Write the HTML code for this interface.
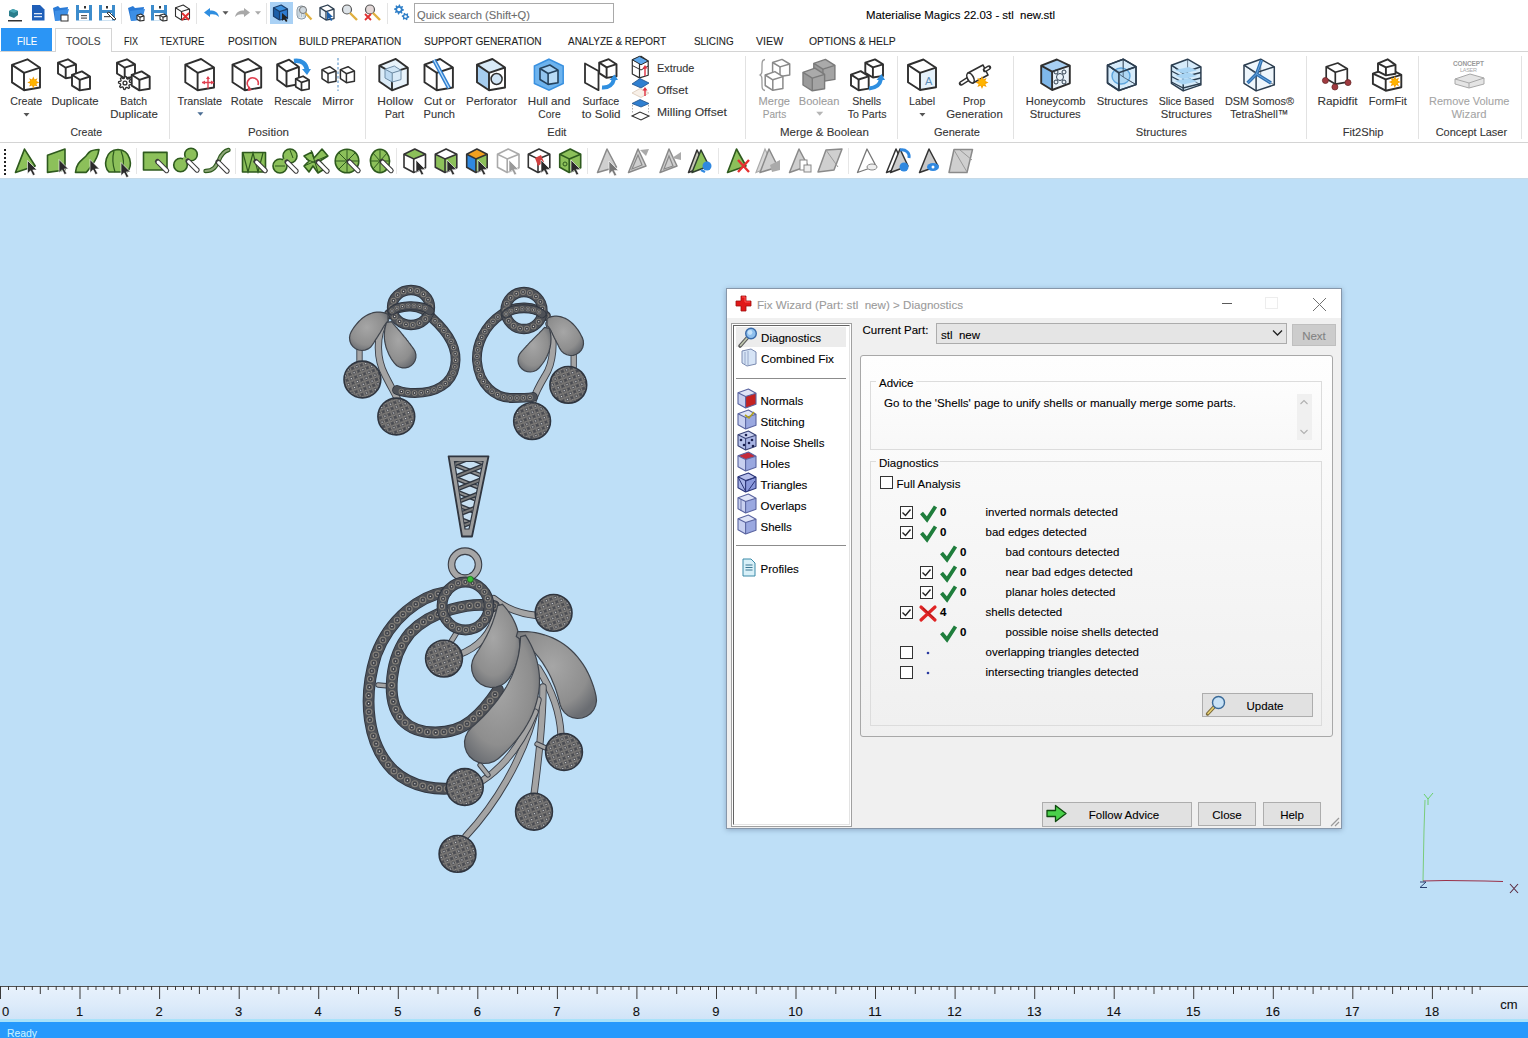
<!DOCTYPE html>
<html><head><meta charset="utf-8"><title>Materialise Magics</title><style>*{margin:0;padding:0;box-sizing:border-box}
html,body{width:1528px;height:1038px;overflow:hidden}
body{position:relative;font-family:"Liberation Sans",sans-serif;font-size:12px;color:#000;background:#fff}
.a{position:absolute}
.t{position:absolute;white-space:pre}
svg{overflow:visible}
.t{-webkit-text-stroke:0.1px currentColor}
</style></head><body>
<div class="a" style="left:0px;top:0px;width:1528px;height:28px;background:#fff"></div>
<div class="t" style="top:9.62px;font-size:11.5px;line-height:11.5px;color:#000;left:865.5px;transform:scaleX(0.9923);transform-origin:0 0;">Materialise Magics 22.03 - stl&nbsp; new.stl</div>
<div class="a" style="left:414px;top:3px;width:200px;height:20px;border:1px solid #a9a9a9;background:#fff"></div>
<div class="t" style="top:9.62px;font-size:11.5px;line-height:11.5px;color:#6d6d6d;left:417px;transform:scaleX(0.9688);transform-origin:0 0;">Quick search (Shift+Q)</div>
<svg class="a" style="left:0px;top:0px;" width="1528" height="28" viewBox="0 0 1528 28"><polygon points="9,11 13,9 18,11 18,15 14,18 9,16" fill="#2b7e8c"/><polygon points="13,9 18,11 14,13 9,11" fill="#4aa7b5"/><rect x="8" y="20" width="14" height="1.5" fill="#333"/><path d="M32,5 L40,5 L44.5,9.5 L44.5,20.5 L32,20.5 Z" fill="#1f5fb8"/><rect x="34" y="13" width="8" height="1.3" fill="#dfe9f7"/><rect x="34" y="16" width="8" height="1.3" fill="#dfe9f7"/><path d="M53,8 L58,6 L60,8 L68,7 L66,19 L55,21 Z" fill="#2a7ad6"/><path d="M55,11 L69,9 L66,20 L55,21 Z" fill="#3d8fe6"/><rect x="61" y="15" width="7" height="6" fill="#fff" stroke="#333" stroke-width="1"/><path d="M76,5 L92,5 L92,20.5 L76,20.5 Z" fill="#3d8ccc"/><rect x="79" y="5" width="10" height="5" fill="#fff"/><rect x="79" y="13" width="10" height="7.5" fill="#fff"/><rect x="81" y="15" width="6" height="1.2" fill="#555"/><rect x="81" y="17.5" width="6" height="1.2" fill="#555"/><rect x="84" y="6" width="2" height="2.5" fill="#333"/><path d="M99,5 L115,5 L115,20.5 L99,20.5 Z" fill="#3d8ccc"/><rect x="102" y="5" width="10" height="5" fill="#fff"/><rect x="102" y="13" width="10" height="7.5" fill="#fff"/><rect x="104" y="16" width="6" height="1.2" fill="#555"/><rect x="106" y="6" width="2" height="2.5" fill="#333"/><path d="M107,13 L114,20 L116,19 L109,12 Z" fill="#fff" stroke="#333" stroke-width="1"/><rect x="121" y="3" width="1" height="21" fill="#e4e4e4"/><path d="M128,8 L133,6 L135,8 L144,7 L142,19 L131,21 Z" fill="#2a7ad6"/><path d="M130,11 L145,9 L142,20 L131,21 Z" fill="#3d8fe6"/><polygon points="137.0,15.3 140.8,14.0 144.0,15.9 140.0,17.1" fill="#fff"/><polygon points="137.0,15.3 140.0,17.1 140.0,21.0 137.0,19.2" fill="#fff"/><polygon points="140.0,17.1 144.0,15.9 144.0,20.4 140.0,21.0" fill="#fff"/><polygon points="137.0,15.3 140.8,14.0 144.0,15.9 144.0,20.4 140.0,21.0 137.0,19.2" fill="none" stroke="#2f2f2f" stroke-width="1.1" stroke-linejoin="round"/><polyline points="137.0,15.3 140.0,17.1 144.0,15.9" fill="none" stroke="#2f2f2f" stroke-width="1.1" stroke-linejoin="round"/><line x1="140.0" y1="17.1" x2="140.0" y2="21.0" stroke="#2f2f2f" stroke-width="1.1"/><path d="M151,5 L167,5 L167,20.5 L151,20.5 Z" fill="#3d8ccc"/><rect x="154" y="5" width="10" height="5" fill="#fff"/><rect x="154" y="13" width="10" height="7.5" fill="#fff"/><rect x="155" y="15" width="5" height="1.2" fill="#555"/><rect x="159" y="6" width="2" height="2.5" fill="#333"/><polygon points="160.0,15.3 163.8,14.0 167.0,15.9 163.0,17.1" fill="#fff"/><polygon points="160.0,15.3 163.0,17.1 163.0,21.0 160.0,19.2" fill="#fff"/><polygon points="163.0,17.1 167.0,15.9 167.0,20.4 163.0,21.0" fill="#fff"/><polygon points="160.0,15.3 163.8,14.0 167.0,15.9 167.0,20.4 163.0,21.0 160.0,19.2" fill="none" stroke="#2f2f2f" stroke-width="1.1" stroke-linejoin="round"/><polyline points="160.0,15.3 163.0,17.1 167.0,15.9" fill="none" stroke="#2f2f2f" stroke-width="1.1" stroke-linejoin="round"/><line x1="163.0" y1="17.1" x2="163.0" y2="21.0" stroke="#2f2f2f" stroke-width="1.1"/><polygon points="175.5,7.7 183.2,5.0 189.5,9.1 181.5,11.6" fill="#fff"/><polygon points="175.5,7.7 181.5,11.6 181.5,20.0 175.5,16.2" fill="#fff"/><polygon points="181.5,11.6 189.5,9.1 189.5,18.6 181.5,20.0" fill="#fff"/><polygon points="175.5,7.7 183.2,5.0 189.5,9.1 189.5,18.6 181.5,20.0 175.5,16.2" fill="none" stroke="#2f2f2f" stroke-width="1.1" stroke-linejoin="round"/><polyline points="175.5,7.7 181.5,11.6 189.5,9.1" fill="none" stroke="#2f2f2f" stroke-width="1.1" stroke-linejoin="round"/><line x1="181.5" y1="11.6" x2="181.5" y2="20.0" stroke="#2f2f2f" stroke-width="1.1"/><path d="M182,13 L189,20 M189,13 L182,20" stroke="#e03030" stroke-width="1.8"/><rect x="196" y="3" width="1" height="21" fill="#e4e4e4"/><path d="M204,12.5 L210,8 L210,10.5 C215,10.5 218,12 219,17 C216,14 213,14 210,14.5 L210,17 Z" fill="#2f8ee0"/><polygon points="222.5,11.2 228.5,11.2 225.5,14.8" fill="#555"/><path d="M250,12.5 L244,8 L244,10.5 C239,10.5 236,12 235,17 C238,14 241,14 244,14.5 L244,17 Z" fill="#a8a8a8"/><polygon points="255.0,11.2 261.0,11.2 258.0,14.8" fill="#aaa"/><rect x="266" y="3" width="1" height="21" fill="#e4e4e4"/><rect x="270" y="2" width="23" height="22" fill="#a9d1f5"/><polygon points="273.5,7.7 281.2,5.0 287.5,9.1 279.5,11.6" fill="#3b8fdc"/><polygon points="273.5,7.7 279.5,11.6 279.5,20.0 273.5,16.2" fill="#1d5fa8"/><polygon points="279.5,11.6 287.5,9.1 287.5,18.6 279.5,20.0" fill="#2f7bd0"/><polygon points="273.5,7.7 281.2,5.0 287.5,9.1 287.5,18.6 279.5,20.0 273.5,16.2" fill="none" stroke="#1a3d6a" stroke-width="1.2" stroke-linejoin="round"/><polyline points="273.5,7.7 279.5,11.6 287.5,9.1" fill="none" stroke="#1a3d6a" stroke-width="1.2" stroke-linejoin="round"/><line x1="279.5" y1="11.6" x2="279.5" y2="20.0" stroke="#1a3d6a" stroke-width="1.2"/><path d="M282,13 L282,21 L284,19 L286,22 L287.5,21 L285.5,18 L288,18 Z" fill="#222"/><rect x="297" y="6" width="9" height="13" rx="4" fill="#dfe6ea" stroke="#8a9aa8" stroke-width="1"/><path d="M299,9 v8 M301.5,9 v8 M304,9 v8" stroke="#9fb5c5" stroke-width="0.8"/><circle cx="303" cy="10" r="3.5" fill="#cfd8df" stroke="#777" stroke-width="1"/><path d="M305.5,13 L311.5,19.5" stroke="#e0b040" stroke-width="2.2"/><polygon points="320.0,7.7 327.7,5.0 334.0,9.1 326.0,11.6" fill="#fff"/><polygon points="320.0,7.7 326.0,11.6 326.0,20.0 320.0,16.2" fill="#eaf2f8"/><polygon points="326.0,11.6 334.0,9.1 334.0,18.6 326.0,20.0" fill="#fff"/><polygon points="320.0,7.7 327.7,5.0 334.0,9.1 334.0,18.6 326.0,20.0 320.0,16.2" fill="none" stroke="#2c3e50" stroke-width="1.3" stroke-linejoin="round"/><polyline points="320.0,7.7 326.0,11.6 334.0,9.1" fill="none" stroke="#2c3e50" stroke-width="1.3" stroke-linejoin="round"/><line x1="326.0" y1="11.6" x2="326.0" y2="20.0" stroke="#2c3e50" stroke-width="1.3"/><path d="M327,11 L327,20 L329,18 L331,21 L332.5,20 L330.5,17 L333,17 Z" fill="#1d5fa8"/><circle cx="347" cy="9.5" r="4.5" fill="#dde3e8" stroke="#555" stroke-width="1.2"/><path d="M350,13 L357,20" stroke="#e0b040" stroke-width="2.4"/><circle cx="370" cy="9.5" r="4.5" fill="#e3d8d8" stroke="#555" stroke-width="1.2"/><path d="M373,13 L380,20" stroke="#e0b040" stroke-width="2.4"/><path d="M365,14 L371,20 M371,14 L365,20" stroke="#e03030" stroke-width="1.8"/><rect x="387" y="3" width="1" height="21" fill="#e4e4e4"/><polygon points="404.0,9.5 403.9,10.5 402.3,10.9 402.0,11.5 402.5,13.0 401.8,13.7 400.4,12.8 399.7,13.0 399.0,14.5 398.0,14.4 397.6,12.8 397.0,12.5 395.5,13.0 394.8,12.3 395.7,10.9 395.5,10.2 394.0,9.5 394.1,8.5 395.7,8.1 396.0,7.5 395.5,6.0 396.2,5.3 397.6,6.2 398.3,6.0 399.0,4.5 400.0,4.6 400.4,6.2 401.0,6.5 402.5,6.0 403.2,6.7 402.3,8.1 402.5,8.8" fill="#2f7fc8" stroke="#2f7fc8" stroke-width="0" stroke-linejoin="round"/><circle cx="399" cy="9.5" r="1.5" fill="none" stroke="#2f7fc8" stroke-width="0"/><circle cx="399" cy="9.5" r="1.8" fill="#fff"/><polygon points="409.3,16.5 409.2,17.5 407.9,17.9 407.4,18.4 407.4,19.8 406.5,20.2 405.5,19.2 404.8,19.1 403.6,19.8 402.8,19.2 403.1,17.9 402.9,17.2 401.7,16.5 401.8,15.5 403.1,15.1 403.6,14.6 403.6,13.2 404.5,12.8 405.5,13.8 406.2,13.9 407.4,13.2 408.2,13.8 407.9,15.1 408.1,15.8" fill="#2f7fc8" stroke="#2f7fc8" stroke-width="0" stroke-linejoin="round"/><circle cx="405.5" cy="16.5" r="1.14" fill="none" stroke="#2f7fc8" stroke-width="0"/><circle cx="405.5" cy="16.5" r="1.3" fill="#fff"/></svg>
<div class="a" style="left:1px;top:28px;width:51px;height:23px;background:#2b95f5"></div>
<div class="t" style="top:35.62px;font-size:11.5px;line-height:11.5px;color:#fff;left:16.5px;transform:scaleX(0.8232);transform-origin:0 0;">FILE</div>
<div class="a" style="left:0px;top:51px;width:1528px;height:1px;background:#d4d4d4"></div>
<div class="a" style="left:55px;top:28px;width:57px;height:24px;background:#fff;border:1px solid #d4d4d4;border-bottom:none"></div>
<div class="t" style="top:35.62px;font-size:11.5px;line-height:11.5px;color:#454545;left:66px;transform:scaleX(0.8896);transform-origin:0 0;">TOOLS</div>
<div class="t" style="top:35.62px;font-size:11.5px;line-height:11.5px;color:#1e1e1e;left:123.7px;transform:scaleX(0.7825);transform-origin:0 0;">FIX</div>
<div class="t" style="top:35.62px;font-size:11.5px;line-height:11.5px;color:#1e1e1e;left:160.3px;transform:scaleX(0.8254);transform-origin:0 0;">TEXTURE</div>
<div class="t" style="top:35.62px;font-size:11.5px;line-height:11.5px;color:#1e1e1e;left:227.6px;transform:scaleX(0.8898);transform-origin:0 0;">POSITION</div>
<div class="t" style="top:35.62px;font-size:11.5px;line-height:11.5px;color:#1e1e1e;left:299.3px;transform:scaleX(0.8667);transform-origin:0 0;">BUILD PREPARATION</div>
<div class="t" style="top:35.62px;font-size:11.5px;line-height:11.5px;color:#1e1e1e;left:424.2px;transform:scaleX(0.8805);transform-origin:0 0;">SUPPORT GENERATION</div>
<div class="t" style="top:35.62px;font-size:11.5px;line-height:11.5px;color:#1e1e1e;left:568px;transform:scaleX(0.8665);transform-origin:0 0;">ANALYZE &amp; REPORT</div>
<div class="t" style="top:35.62px;font-size:11.5px;line-height:11.5px;color:#1e1e1e;left:693.8px;transform:scaleX(0.8606);transform-origin:0 0;">SLICING</div>
<div class="t" style="top:35.62px;font-size:11.5px;line-height:11.5px;color:#1e1e1e;left:755.6px;transform:scaleX(0.9255);transform-origin:0 0;">VIEW</div>
<div class="t" style="top:35.62px;font-size:11.5px;line-height:11.5px;color:#1e1e1e;left:809.3px;transform:scaleX(0.9034);transform-origin:0 0;">OPTIONS &amp; HELP</div>
<div class="a" style="left:0px;top:52px;width:1528px;height:90px;background:#fff"></div>
<div class="a" style="left:0px;top:142px;width:1528px;height:1px;background:#d4d4d4"></div>
<div class="a" style="left:169px;top:56px;width:1px;height:83px;background:#e2e2e2"></div>
<div class="a" style="left:365px;top:56px;width:1px;height:83px;background:#e2e2e2"></div>
<div class="a" style="left:745px;top:56px;width:1px;height:83px;background:#e2e2e2"></div>
<div class="a" style="left:897px;top:56px;width:1px;height:83px;background:#e2e2e2"></div>
<div class="a" style="left:1013px;top:56px;width:1px;height:83px;background:#e2e2e2"></div>
<div class="a" style="left:1306px;top:56px;width:1px;height:83px;background:#e2e2e2"></div>
<div class="a" style="left:1418px;top:56px;width:1px;height:83px;background:#e2e2e2"></div>
<div class="a" style="left:1521px;top:56px;width:1px;height:83px;background:#e2e2e2"></div>
<svg class="a" style="left:0px;top:0px;" width="1528" height="142" viewBox="0 0 1528 142"><polygon points="12.0,64.9 27.4,59.3 40.0,67.7 24.0,72.9" fill="#fff"/><polygon points="12.0,64.9 24.0,72.9 24.0,90.3 12.0,82.4" fill="#fff"/><polygon points="24.0,72.9 40.0,67.7 40.0,87.5 24.0,90.3" fill="#fff"/><polygon points="12.0,64.9 27.4,59.3 40.0,67.7 40.0,87.5 24.0,90.3 12.0,82.4" fill="none" stroke="#2f2f2f" stroke-width="1.9" stroke-linejoin="round"/><polyline points="12.0,64.9 24.0,72.9 40.0,67.7" fill="none" stroke="#2f2f2f" stroke-width="1.9" stroke-linejoin="round"/><line x1="24.0" y1="72.9" x2="24.0" y2="90.3" stroke="#2f2f2f" stroke-width="1.9"/><polygon points="39.3,82.4 36.3,83.7 37.5,86.6 34.6,85.4 33.3,88.4 32.0,85.4 29.1,86.6 30.3,83.7 27.3,82.4 30.3,81.1 29.1,78.2 32.0,79.4 33.3,76.4 34.6,79.4 37.5,78.2 36.3,81.1" fill="#f5a000"/><circle cx="33.3" cy="82.4" r="3.0" fill="#ffb400"/><polygon points="23.5,113.0 29.5,113.0 26.5,116.5" fill="#555"/><polygon points="58.0,62.7 67.9,59.3 76.0,64.4 65.7,67.7" fill="#fff"/><polygon points="58.0,62.7 65.7,67.7 65.7,78.3 58.0,73.5" fill="#fff"/><polygon points="65.7,67.7 76.0,64.4 76.0,76.6 65.7,78.3" fill="#fff"/><polygon points="58.0,62.7 67.9,59.3 76.0,64.4 76.0,76.6 65.7,78.3 58.0,73.5" fill="none" stroke="#2f2f2f" stroke-width="1.9" stroke-linejoin="round"/><polyline points="58.0,62.7 65.7,67.7 76.0,64.4" fill="none" stroke="#2f2f2f" stroke-width="1.9" stroke-linejoin="round"/><line x1="65.7" y1="67.7" x2="65.7" y2="78.3" stroke="#2f2f2f" stroke-width="1.9"/><polygon points="72.0,74.8 81.9,71.4 90.0,76.5 79.7,79.8" fill="#fff"/><polygon points="72.0,74.8 79.7,79.8 79.7,90.4 72.0,85.6" fill="#fff"/><polygon points="79.7,79.8 90.0,76.5 90.0,88.7 79.7,90.4" fill="#fff"/><polygon points="72.0,74.8 81.9,71.4 90.0,76.5 90.0,88.7 79.7,90.4 72.0,85.6" fill="none" stroke="#2f2f2f" stroke-width="1.9" stroke-linejoin="round"/><polyline points="72.0,74.8 79.7,79.8 90.0,76.5" fill="none" stroke="#2f2f2f" stroke-width="1.9" stroke-linejoin="round"/><line x1="79.7" y1="79.8" x2="79.7" y2="90.4" stroke="#2f2f2f" stroke-width="1.9"/><polygon points="117.0,62.7 126.9,59.3 135.0,64.4 124.7,67.7" fill="#fff"/><polygon points="117.0,62.7 124.7,67.7 124.7,78.3 117.0,73.5" fill="#fff"/><polygon points="124.7,67.7 135.0,64.4 135.0,76.6 124.7,78.3" fill="#fff"/><polygon points="117.0,62.7 126.9,59.3 135.0,64.4 135.0,76.6 124.7,78.3 117.0,73.5" fill="none" stroke="#2f2f2f" stroke-width="1.9" stroke-linejoin="round"/><polyline points="117.0,62.7 124.7,67.7 135.0,64.4" fill="none" stroke="#2f2f2f" stroke-width="1.9" stroke-linejoin="round"/><line x1="124.7" y1="67.7" x2="124.7" y2="78.3" stroke="#2f2f2f" stroke-width="1.9"/><polygon points="131.7,74.8 141.6,71.4 149.7,76.5 139.4,79.8" fill="#fff"/><polygon points="131.7,74.8 139.4,79.8 139.4,90.4 131.7,85.6" fill="#fff"/><polygon points="139.4,79.8 149.7,76.5 149.7,88.7 139.4,90.4" fill="#fff"/><polygon points="131.7,74.8 141.6,71.4 149.7,76.5 149.7,88.7 139.4,90.4 131.7,85.6" fill="none" stroke="#2f2f2f" stroke-width="1.9" stroke-linejoin="round"/><polyline points="131.7,74.8 139.4,79.8 149.7,76.5" fill="none" stroke="#2f2f2f" stroke-width="1.9" stroke-linejoin="round"/><line x1="139.4" y1="79.8" x2="139.4" y2="90.4" stroke="#2f2f2f" stroke-width="1.9"/><polygon points="131.5,83.0 131.4,84.3 129.3,84.8 128.9,85.6 129.6,87.6 128.6,88.4 126.8,87.3 125.9,87.6 125.0,89.5 123.7,89.4 123.2,87.3 122.4,86.9 120.4,87.6 119.6,86.6 120.7,84.8 120.4,83.9 118.5,83.0 118.6,81.7 120.7,81.2 121.1,80.4 120.4,78.4 121.4,77.6 123.2,78.7 124.1,78.4 125.0,76.5 126.3,76.6 126.8,78.7 127.6,79.1 129.6,78.4 130.4,79.4 129.3,81.2 129.6,82.1" fill="#fff" stroke="#2f2f2f" stroke-width="1.3" stroke-linejoin="round"/><circle cx="125" cy="83" r="1.95" fill="none" stroke="#2f2f2f" stroke-width="1.3"/><polygon points="185.3,64.6 201.1,59.0 214.0,67.5 197.6,72.8" fill="#fff"/><polygon points="185.3,64.6 197.6,72.8 197.6,90.3 185.3,82.3" fill="#fff"/><polygon points="197.6,72.8 214.0,67.5 214.0,87.5 197.6,90.3" fill="#fff"/><polygon points="185.3,64.6 201.1,59.0 214.0,67.5 214.0,87.5 197.6,90.3 185.3,82.3" fill="none" stroke="#2f2f2f" stroke-width="1.9" stroke-linejoin="round"/><polyline points="185.3,64.6 197.6,72.8 214.0,67.5" fill="none" stroke="#2f2f2f" stroke-width="1.9" stroke-linejoin="round"/><line x1="197.6" y1="72.8" x2="197.6" y2="90.3" stroke="#2f2f2f" stroke-width="1.9"/><path d="M202,82.5 H214 M208,77 V88.5" stroke="#e04050" stroke-width="1.4"/><polygon points="214,82.5 211,80.5 211,84.5" fill="#e04050"/><polygon points="208,76 206,79 210,79" fill="#e04050"/><polygon points="202,82.5 205,80.5 205,84.5" fill="#e04050"/><polygon points="197.4,112.3 203.4,112.3 200.4,115.8" fill="#4a6d93"/><polygon points="232.5,64.6 248.3,59.0 261.2,67.5 244.8,72.8" fill="#fff"/><polygon points="232.5,64.6 244.8,72.8 244.8,90.3 232.5,82.3" fill="#fff"/><polygon points="244.8,72.8 261.2,67.5 261.2,87.5 244.8,90.3" fill="#fff"/><polygon points="232.5,64.6 248.3,59.0 261.2,67.5 261.2,87.5 244.8,90.3 232.5,82.3" fill="none" stroke="#2f2f2f" stroke-width="1.9" stroke-linejoin="round"/><polyline points="232.5,64.6 244.8,72.8 261.2,67.5" fill="none" stroke="#2f2f2f" stroke-width="1.9" stroke-linejoin="round"/><line x1="244.8" y1="72.8" x2="244.8" y2="90.3" stroke="#2f2f2f" stroke-width="1.9"/><path d="M250,88 A5.5,5.5 0 1 1 258,85" stroke="#e04050" stroke-width="1.7" fill="none"/><polygon points="248,86 252,90 248,91" fill="#e04050"/><polygon points="277.2,64.5 289.1,59.7 298.9,66.9 286.5,71.5" fill="#fff"/><polygon points="277.2,64.5 286.5,71.5 286.5,86.5 277.2,79.7" fill="#fff"/><polygon points="286.5,71.5 298.9,66.9 298.9,84.1 286.5,86.5" fill="#fff"/><polygon points="277.2,64.5 289.1,59.7 298.9,66.9 298.9,84.1 286.5,86.5 277.2,79.7" fill="none" stroke="#2f2f2f" stroke-width="1.9" stroke-linejoin="round"/><polyline points="277.2,64.5 286.5,71.5 298.9,66.9" fill="none" stroke="#2f2f2f" stroke-width="1.9" stroke-linejoin="round"/><line x1="286.5" y1="71.5" x2="286.5" y2="86.5" stroke="#2f2f2f" stroke-width="1.9"/><polygon points="295.7,78.7 303.1,76.2 309.1,80.0 301.5,82.4" fill="#fff"/><polygon points="295.7,78.7 301.5,82.4 301.5,90.3 295.7,86.7" fill="#fff"/><polygon points="301.5,82.4 309.1,80.0 309.1,89.0 301.5,90.3" fill="#fff"/><polygon points="295.7,78.7 303.1,76.2 309.1,80.0 309.1,89.0 301.5,90.3 295.7,86.7" fill="none" stroke="#2f2f2f" stroke-width="1.7" stroke-linejoin="round"/><polyline points="295.7,78.7 301.5,82.4 309.1,80.0" fill="none" stroke="#2f2f2f" stroke-width="1.7" stroke-linejoin="round"/><line x1="301.5" y1="82.4" x2="301.5" y2="90.3" stroke="#2f2f2f" stroke-width="1.7"/><path d="M294,61 C302,60 306,64 307,70" stroke="#2f8fe0" stroke-width="4.5" fill="none"/><polygon points="302,69 311,69 307,75" fill="#2f8fe0"/><polygon points="322.0,69.6 329.7,66.7 336.0,71.0 328.0,73.7" fill="#fff"/><polygon points="322.0,69.6 328.0,73.7 328.0,82.7 322.0,78.6" fill="#fff"/><polygon points="328.0,73.7 336.0,71.0 336.0,81.3 328.0,82.7" fill="#fff"/><polygon points="322.0,69.6 329.7,66.7 336.0,71.0 336.0,81.3 328.0,82.7 322.0,78.6" fill="none" stroke="#2f2f2f" stroke-width="1.5" stroke-linejoin="round"/><polyline points="322.0,69.6 328.0,73.7 336.0,71.0" fill="none" stroke="#2f2f2f" stroke-width="1.5" stroke-linejoin="round"/><line x1="328.0" y1="73.7" x2="328.0" y2="82.7" stroke="#2f2f2f" stroke-width="1.5"/><polygon points="340.4,69.6 348.1,66.7 354.4,71.0 346.4,73.7" fill="#fff"/><polygon points="340.4,69.6 346.4,73.7 346.4,82.7 340.4,78.6" fill="#fff"/><polygon points="346.4,73.7 354.4,71.0 354.4,81.3 346.4,82.7" fill="#fff"/><polygon points="340.4,69.6 348.1,66.7 354.4,71.0 354.4,81.3 346.4,82.7 340.4,78.6" fill="none" stroke="#2f2f2f" stroke-width="1.5" stroke-linejoin="round"/><polyline points="340.4,69.6 346.4,73.7 354.4,71.0" fill="none" stroke="#2f2f2f" stroke-width="1.5" stroke-linejoin="round"/><line x1="346.4" y1="73.7" x2="346.4" y2="82.7" stroke="#2f2f2f" stroke-width="1.5"/><line x1="338" y1="58" x2="338" y2="91" stroke="#6a9fd0" stroke-width="1.2" stroke-dasharray="2.5,2"/><polygon points="379.3,65.7 395.8,58.9 407.8,67.7 392.0,72.6" fill="#e8f3fb"/><polygon points="379.3,65.7 392.0,72.6 392.0,90.3 379.3,81.5" fill="#dcecf8"/><polygon points="392.0,72.6 407.8,67.7 407.8,84.3 392.0,90.3" fill="#e8f3fb"/><polygon points="379.3,65.7 395.8,58.9 407.8,67.7 407.8,84.3 392.0,90.3 379.3,81.5" fill="none" stroke="#2f2f2f" stroke-width="1.9" stroke-linejoin="round"/><polyline points="379.3,65.7 392.0,72.6 407.8,67.7" fill="none" stroke="#2f2f2f" stroke-width="1.9" stroke-linejoin="round"/><line x1="392.0" y1="72.6" x2="392.0" y2="90.3" stroke="#2f2f2f" stroke-width="1.9"/><polygon points="385.0,69.2 394.3,66.0 401.0,70.3 392.2,73.0" fill="#cfe5f6"/><polygon points="385.0,69.2 392.2,73.0 392.2,82.0 385.0,78.0" fill="#bcd9f1"/><polygon points="392.2,73.0 401.0,70.3 401.0,79.6 392.2,82.0" fill="#d8eaf8"/><polygon points="385.0,69.2 394.3,66.0 401.0,70.3 401.0,79.6 392.2,82.0 385.0,78.0" fill="none" stroke="#6f8ea8" stroke-width="1.0" stroke-linejoin="round"/><polyline points="385.0,69.2 392.2,73.0 401.0,70.3" fill="none" stroke="#6f8ea8" stroke-width="1.0" stroke-linejoin="round"/><line x1="392.2" y1="73.0" x2="392.2" y2="82.0" stroke="#6f8ea8" stroke-width="1.0"/><polygon points="424.5,64.6 440.1,59.0 452.9,67.5 436.7,72.8" fill="#fff"/><polygon points="424.5,64.6 436.7,72.8 436.7,90.3 424.5,82.3" fill="#fff"/><polygon points="436.7,72.8 452.9,67.5 452.9,87.5 436.7,90.3" fill="#fff"/><polygon points="424.5,64.6 440.1,59.0 452.9,67.5 452.9,87.5 436.7,90.3 424.5,82.3" fill="none" stroke="#2f2f2f" stroke-width="1.9" stroke-linejoin="round"/><polyline points="424.5,64.6 436.7,72.8 452.9,67.5" fill="none" stroke="#2f2f2f" stroke-width="1.9" stroke-linejoin="round"/><line x1="436.7" y1="72.8" x2="436.7" y2="90.3" stroke="#2f2f2f" stroke-width="1.9"/><path d="M434,60 L449,88" stroke="#2f7fd0" stroke-width="4.2"/><path d="M434,60 L449,88" stroke="#bfe0fa" stroke-width="1.3"/><polygon points="477.0,64.6 492.4,59.0 505.0,67.5 489.0,72.8" fill="#d8eaf8"/><polygon points="477.0,64.6 489.0,72.8 489.0,90.3 477.0,82.3" fill="#a6cdef"/><polygon points="489.0,72.8 505.0,67.5 505.0,87.5 489.0,90.3" fill="#fff"/><polygon points="477.0,64.6 492.4,59.0 505.0,67.5 505.0,87.5 489.0,90.3 477.0,82.3" fill="none" stroke="#2f2f2f" stroke-width="1.9" stroke-linejoin="round"/><polyline points="477.0,64.6 489.0,72.8 505.0,67.5" fill="none" stroke="#2f2f2f" stroke-width="1.9" stroke-linejoin="round"/><line x1="489.0" y1="72.8" x2="489.0" y2="90.3" stroke="#2f2f2f" stroke-width="1.9"/><circle cx="496.6" cy="79" r="5.5" fill="#cfe4f6" stroke="#2f2f2f" stroke-width="1.5"/><polygon points="549,59.2 563.2,66 563.2,83.5 549,90.2 534.4,83.5 534.4,66" fill="#6db3ee" stroke="#3a91e0" stroke-width="1.5"/><polygon points="540.0,68.5 549.9,65.0 558.0,70.2 548.1,73.5" fill="#a8d2f4"/><polygon points="540.0,68.5 548.1,73.5 548.1,84.4 540.0,79.5" fill="#92c4ef"/><polygon points="548.1,73.5 558.0,70.2 558.0,82.7 548.1,84.4" fill="#b9dbf6"/><polygon points="540.0,68.5 549.9,65.0 558.0,70.2 558.0,82.7 548.1,84.4 540.0,79.5" fill="none" stroke="#24425e" stroke-width="1.6" stroke-linejoin="round"/><polyline points="540.0,68.5 548.1,73.5 558.0,70.2" fill="none" stroke="#24425e" stroke-width="1.6" stroke-linejoin="round"/><line x1="548.1" y1="73.5" x2="548.1" y2="84.4" stroke="#24425e" stroke-width="1.6"/><polygon points="585,63.5 598.5,71 598.5,90.2 585,82.8" fill="#fff" stroke="#2f2f2f" stroke-width="1.8" stroke-linejoin="round"/><polygon points="599.2,62.6 608.7,59.2 616.5,64.2 606.6,67.4" fill="#fff"/><polygon points="599.2,62.6 606.6,67.4 606.6,77.9 599.2,73.1" fill="#fff"/><polygon points="606.6,67.4 616.5,64.2 616.5,76.2 606.6,77.9" fill="#fff"/><polygon points="599.2,62.6 608.7,59.2 616.5,64.2 616.5,76.2 606.6,77.9 599.2,73.1" fill="none" stroke="#2f2f2f" stroke-width="1.9" stroke-linejoin="round"/><polyline points="599.2,62.6 606.6,67.4 616.5,64.2" fill="none" stroke="#2f2f2f" stroke-width="1.9" stroke-linejoin="round"/><line x1="606.6" y1="67.4" x2="606.6" y2="77.9" stroke="#2f2f2f" stroke-width="1.9"/><path d="M602,87.5 C609,88 613,84 614,79" stroke="#2f8fe0" stroke-width="4" fill="none"/><polygon points="609.5,80 618,80 614.5,74.5" fill="#2f8fe0"/><polygon points="632.3,59.8 641.0,56.3 648.2,61.1 639.5,62.8" fill="#7fbaf0"/><polygon points="632.3,59.8 639.5,62.8 639.5,77.9 632.3,74.0" fill="#fff"/><polygon points="639.5,62.8 648.2,61.1 648.2,75.3 639.5,77.9" fill="#fff"/><polygon points="632.3,59.8 641.0,56.3 648.2,61.1 648.2,75.3 639.5,77.9 632.3,74.0" fill="none" stroke="#2f2f2f" stroke-width="1.2" stroke-linejoin="round"/><polyline points="632.3,59.8 639.5,62.8 648.2,61.1" fill="none" stroke="#2f2f2f" stroke-width="1.2" stroke-linejoin="round"/><line x1="639.5" y1="62.8" x2="639.5" y2="77.9" stroke="#2f2f2f" stroke-width="1.2"/><polygon points="632.3,59.8 639.4,56.3 648.2,61 641,64.8" fill="#5ea8ec" stroke="#2f2f2f" stroke-width="1"/><path d="M632.3,65.5 L641,70 L648.2,66" stroke="#2f2f2f" stroke-width="1" fill="none"/><path d="M645,76 V67" stroke="#e03040" stroke-width="1.4"/><polygon points="642.5,68.5 647.5,68.5 645,65" fill="#e03040"/><polygon points="632,84 640,78.5 649,83 641,88" fill="#2f7fd0" stroke="#1d4f88" stroke-width="0.8"/><polygon points="632,93 640,88.5 649,93 641,97.5" fill="#f8f0e8" stroke="#d8c8b8" stroke-width="0.8"/><path d="M645,96 V89" stroke="#e03040" stroke-width="1.4"/><polygon points="642.5,90.5 647.5,90.5 645,87" fill="#e03040"/><polygon points="632,103.5 640,99.5 649,103.5 641,107" fill="#2f7fd0" stroke="#1d4f88" stroke-width="0.8"/><path d="M632.5,105 V113 M648.5,105 V113" stroke="#999" stroke-width="0.8" stroke-dasharray="1.5,1.5"/><polygon points="632,116 640,112 649,116 641,120" fill="#fff" stroke="#2f2f2f" stroke-width="1.1"/><path d="M765,59.5 C762,60 762,62 762,66 C762,73 762,74 760,75 C762,76 762,77 762,84 C762,88 762,90 765,90.5" stroke="#9a9a9a" stroke-width="1.3" fill="none"/><polygon points="772.6,62.5 782.0,59.4 789.7,64.0 780.0,66.9" fill="#fff"/><polygon points="772.6,62.5 780.0,66.9 780.0,76.5 772.6,72.1" fill="#fff"/><polygon points="780.0,66.9 789.7,64.0 789.7,75.0 780.0,76.5" fill="#fff"/><polygon points="772.6,62.5 782.0,59.4 789.7,64.0 789.7,75.0 780.0,76.5 772.6,72.1" fill="none" stroke="#8a8a8a" stroke-width="1.5" stroke-linejoin="round"/><polyline points="772.6,62.5 780.0,66.9 789.7,64.0" fill="none" stroke="#8a8a8a" stroke-width="1.5" stroke-linejoin="round"/><line x1="780.0" y1="66.9" x2="780.0" y2="76.5" stroke="#8a8a8a" stroke-width="1.5"/><polygon points="765.2,75.0 774.9,71.6 782.9,76.6 772.8,79.8" fill="#fff"/><polygon points="765.2,75.0 772.8,79.8 772.8,90.3 765.2,85.5" fill="#fff"/><polygon points="772.8,79.8 782.9,76.6 782.9,88.6 772.8,90.3" fill="#fff"/><polygon points="765.2,75.0 774.9,71.6 782.9,76.6 782.9,88.6 772.8,90.3 765.2,85.5" fill="none" stroke="#8a8a8a" stroke-width="1.5" stroke-linejoin="round"/><polyline points="765.2,75.0 772.8,79.8 782.9,76.6" fill="none" stroke="#8a8a8a" stroke-width="1.5" stroke-linejoin="round"/><line x1="772.8" y1="79.8" x2="772.8" y2="90.3" stroke="#8a8a8a" stroke-width="1.5"/><polygon points="813.8,63.4 825.4,59.4 834.9,65.3 822.9,69.1" fill="#aaa"/><polygon points="813.8,63.4 822.9,69.1 822.9,81.4 813.8,75.8" fill="#9a9a9a"/><polygon points="822.9,69.1 834.9,65.3 834.9,79.4 822.9,81.4" fill="#a4a4a4"/><polygon points="813.8,63.4 825.4,59.4 834.9,65.3 834.9,79.4 822.9,81.4 813.8,75.8" fill="none" stroke="#7a7a7a" stroke-width="1.4" stroke-linejoin="round"/><polyline points="813.8,63.4 822.9,69.1 834.9,65.3" fill="none" stroke="#7a7a7a" stroke-width="1.4" stroke-linejoin="round"/><line x1="822.9" y1="69.1" x2="822.9" y2="81.4" stroke="#7a7a7a" stroke-width="1.4"/><polygon points="803.0,72.3 814.9,68.2 824.6,74.3 812.3,78.1" fill="#aaa"/><polygon points="803.0,72.3 812.3,78.1 812.3,90.8 803.0,85.0" fill="#9a9a9a"/><polygon points="812.3,78.1 824.6,74.3 824.6,88.8 812.3,90.8" fill="#a4a4a4"/><polygon points="803.0,72.3 814.9,68.2 824.6,74.3 824.6,88.8 812.3,90.8 803.0,85.0" fill="none" stroke="#7a7a7a" stroke-width="1.4" stroke-linejoin="round"/><polyline points="803.0,72.3 812.3,78.1 824.6,74.3" fill="none" stroke="#7a7a7a" stroke-width="1.4" stroke-linejoin="round"/><line x1="812.3" y1="78.1" x2="812.3" y2="90.8" stroke="#7a7a7a" stroke-width="1.4"/><polygon points="816.2,111.8 823.2,111.8 819.7,115.8" fill="#b5b5b5"/><polygon points="865.3,62.7 875.0,59.4 883.0,64.3 872.9,67.4" fill="#fff"/><polygon points="865.3,62.7 872.9,67.4 872.9,77.5 865.3,72.9" fill="#fff"/><polygon points="872.9,67.4 883.0,64.3 883.0,75.9 872.9,77.5" fill="#fff"/><polygon points="865.3,62.7 875.0,59.4 883.0,64.3 883.0,75.9 872.9,77.5 865.3,72.9" fill="none" stroke="#2f2f2f" stroke-width="1.9" stroke-linejoin="round"/><polyline points="865.3,62.7 872.9,67.4 883.0,64.3" fill="none" stroke="#2f2f2f" stroke-width="1.9" stroke-linejoin="round"/><line x1="872.9" y1="67.4" x2="872.9" y2="77.5" stroke="#2f2f2f" stroke-width="1.9"/><polygon points="851.0,74.6 860.7,71.1 868.7,76.3 858.6,79.5" fill="#fff"/><polygon points="851.0,74.6 858.6,79.5 858.6,90.3 851.0,85.4" fill="#fff"/><polygon points="858.6,79.5 868.7,76.3 868.7,88.6 858.6,90.3" fill="#fff"/><polygon points="851.0,74.6 860.7,71.1 868.7,76.3 868.7,88.6 858.6,90.3 851.0,85.4" fill="none" stroke="#2f2f2f" stroke-width="1.9" stroke-linejoin="round"/><polyline points="851.0,74.6 858.6,79.5 868.7,76.3" fill="none" stroke="#2f2f2f" stroke-width="1.9" stroke-linejoin="round"/><line x1="858.6" y1="79.5" x2="858.6" y2="90.3" stroke="#2f2f2f" stroke-width="1.9"/><path d="M869,88.5 C876,88 880,85 881,79" stroke="#2f8fe0" stroke-width="4" fill="none"/><polygon points="876.5,80 885,80 881.5,74" fill="#2f8fe0"/><polygon points="908.0,65.0 923.4,59.5 936.0,67.7 920.0,72.9" fill="#fff"/><polygon points="908.0,65.0 920.0,72.9 920.0,90.0 908.0,82.2" fill="#fff"/><polygon points="920.0,72.9 936.0,67.7 936.0,87.3 920.0,90.0" fill="#e6f2fb"/><polygon points="908.0,65.0 923.4,59.5 936.0,67.7 936.0,87.3 920.0,90.0 908.0,82.2" fill="none" stroke="#2f2f2f" stroke-width="1.9" stroke-linejoin="round"/><polyline points="908.0,65.0 920.0,72.9 936.0,67.7" fill="none" stroke="#2f2f2f" stroke-width="1.9" stroke-linejoin="round"/><line x1="920.0" y1="72.9" x2="920.0" y2="90.0" stroke="#2f2f2f" stroke-width="1.9"/><text x="925" y="85" font-family="Liberation Sans" font-size="11" fill="#5b8db8">A</text><polygon points="919.4,113.0 925.4,113.0 922.4,116.5" fill="#555"/><path d="M961,83.5 L968,79" stroke="#2f2f2f" stroke-width="4.5" stroke-linecap="round"/><path d="M961,83.5 L968,79" stroke="#fff" stroke-width="2"/><path d="M968,73 L983,65 L988,75 L973,83 Z" fill="#fff" stroke="#2f2f2f" stroke-width="1.6" stroke-linejoin="round"/><ellipse cx="970.5" cy="78" rx="3" ry="5.5" transform="rotate(-28 970.5 78)" fill="#fff" stroke="#2f2f2f" stroke-width="1.6"/><path d="M985,70 L989,67.5" stroke="#2f2f2f" stroke-width="4.5" stroke-linecap="round"/><path d="M985,70 L989,67.5" stroke="#fff" stroke-width="2"/><polygon points="988.5,82.5 985.3,83.9 986.6,87.1 983.4,85.8 982.0,89.0 980.6,85.8 977.4,87.1 978.7,83.9 975.5,82.5 978.7,81.1 977.4,77.9 980.6,79.2 982.0,76.0 983.4,79.2 986.6,77.9 985.3,81.1" fill="#f5a000"/><circle cx="982" cy="82.5" r="3.25" fill="#ffb400"/><polygon points="1041.2,65.6 1056.9,59.5 1069.8,65.6 1052.1,71.7" fill="#a8cff2"/><polygon points="1041.2,65.6 1052.1,71.7 1052.1,90.0 1041.2,83.3" fill="#7fb8ea"/><polygon points="1052.1,71.7 1069.8,65.6 1069.8,83.3 1052.1,90.0" fill="#eaf3fa"/><polygon points="1041.2,65.6 1056.9,59.5 1069.8,65.6 1069.8,83.3 1052.1,90.0 1041.2,83.3" fill="none" stroke="#2f2f2f" stroke-width="1.9" stroke-linejoin="round"/><polyline points="1041.2,65.6 1052.1,71.7 1069.8,65.6" fill="none" stroke="#2f2f2f" stroke-width="1.9" stroke-linejoin="round"/><line x1="1052.1" y1="71.7" x2="1052.1" y2="90.0" stroke="#2f2f2f" stroke-width="1.9"/><g stroke="#2f3f4f" stroke-width="1" fill="none"><circle cx="1060" cy="77" r="3.5"/><circle cx="1056" cy="72" r="2"/><circle cx="1064" cy="72" r="2"/><circle cx="1056" cy="82" r="2"/><circle cx="1064" cy="82" r="2"/></g><polygon points="1107.5,65.1 1123.2,59.2 1136.0,66.7 1136.0,84.6 1118.9,90.5 1107.5,83.0" fill="#d6ebfa"/><polyline points="1107.5,65.1 1123.2,77.0 1136.0,84.6" fill="none" stroke="#2c3e50" stroke-width="0.9" opacity="0.7"/><line x1="1123.2" y1="59.2" x2="1123.2" y2="77.0" stroke="#2c3e50" stroke-width="0.9" opacity="0.7"/><polygon points="1107.5,65.1 1123.2,59.2 1136.0,66.7 1136.0,84.6 1118.9,90.5 1107.5,83.0" fill="none" stroke="#2c3e50" stroke-width="1.5" stroke-linejoin="round"/><polyline points="1107.5,65.1 1118.9,72.7 1136.0,66.7" fill="none" stroke="#2c3e50" stroke-width="1.5"/><line x1="1118.9" y1="72.7" x2="1118.9" y2="90.5" stroke="#2c3e50" stroke-width="1.5"/><ellipse cx="1121" cy="76" rx="9" ry="8" fill="#a8d4f4" stroke="#4a9ad8" stroke-width="1.4" opacity="0.85"/><polygon points="1107.5,65.1 1123.2,59.2 1136.0,66.7 1136.0,84.6 1118.9,90.5 1107.5,83.0" fill="none"/><polyline points="1107.5,65.1 1123.2,77.0 1136.0,84.6" fill="none" stroke="#2c3e50" stroke-width="0.9" opacity="0.7"/><line x1="1123.2" y1="59.2" x2="1123.2" y2="77.0" stroke="#2c3e50" stroke-width="0.9" opacity="0.7"/><polygon points="1107.5,65.1 1123.2,59.2 1136.0,66.7 1136.0,84.6 1118.9,90.5 1107.5,83.0" fill="none" stroke="#2c3e50" stroke-width="1.5" stroke-linejoin="round"/><polyline points="1107.5,65.1 1118.9,72.7 1136.0,66.7" fill="none" stroke="#2c3e50" stroke-width="1.5"/><line x1="1118.9" y1="72.7" x2="1118.9" y2="90.5" stroke="#2c3e50" stroke-width="1.5"/><polygon points="1171.4,65.2 1187.6,59.2 1200.9,66.8 1200.9,84.9 1183.2,90.9 1171.4,83.3" fill="#d6ebfa"/><polyline points="1171.4,65.2 1187.6,77.3 1200.9,84.9" fill="none" stroke="#2c3e50" stroke-width="0.9" opacity="0.7"/><line x1="1187.6" y1="59.2" x2="1187.6" y2="77.3" stroke="#2c3e50" stroke-width="0.9" opacity="0.7"/><polygon points="1171.4,65.2 1187.6,59.2 1200.9,66.8 1200.9,84.9 1183.2,90.9 1171.4,83.3" fill="none" stroke="#2c3e50" stroke-width="1.5" stroke-linejoin="round"/><polyline points="1171.4,65.2 1183.2,72.8 1200.9,66.8" fill="none" stroke="#2c3e50" stroke-width="1.5"/><line x1="1183.2" y1="72.8" x2="1183.2" y2="90.9" stroke="#2c3e50" stroke-width="1.5"/><g stroke="#2c3e50" stroke-width="1.3" fill="none"><path d="M1171.4,71 L1183.2,77 L1200.9,72.5"/><path d="M1171.4,76.5 L1183.2,82.5 L1200.9,78"/><path d="M1171.4,82 L1183.2,88 L1200.9,83.5"/></g><g fill="#a8d4f4"><polygon points="1175,70 1183,73.5 1197,70.5 1189,67"/><polygon points="1175,75.5 1183,79 1197,76 1189,72.5"/><polygon points="1175,81 1183,84.5 1197,81.5 1189,78"/></g><polygon points="1244.0,65.2 1260.7,59.2 1274.3,66.8 1274.3,84.9 1256.1,90.9 1244.0,83.3" fill="#eef6fc"/><polyline points="1244.0,65.2 1260.7,77.3 1274.3,84.9" fill="none" stroke="#2c3e50" stroke-width="0.9" opacity="0.7"/><line x1="1260.7" y1="59.2" x2="1260.7" y2="77.3" stroke="#2c3e50" stroke-width="0.9" opacity="0.7"/><polygon points="1244.0,65.2 1260.7,59.2 1274.3,66.8 1274.3,84.9 1256.1,90.9 1244.0,83.3" fill="none" stroke="#2c3e50" stroke-width="1.5" stroke-linejoin="round"/><polyline points="1244.0,65.2 1256.1,72.8 1274.3,66.8" fill="none" stroke="#2c3e50" stroke-width="1.5"/><line x1="1256.1" y1="72.8" x2="1256.1" y2="90.9" stroke="#2c3e50" stroke-width="1.5"/><path d="M1261.5,60 L1256.5,74 L1247.5,83 M1256.5,74 L1271,83" stroke="#2f6fb0" stroke-width="3.4" fill="none" stroke-linejoin="round"/><path d="M1261.5,60 L1256.5,74 L1247.5,83 M1256.5,74 L1271,83" stroke="#6aa8e0" stroke-width="1" fill="none"/><polygon points="1326.2,66.8 1337.8,63.0 1347.3,68.7 1335.3,72.3" fill="#fff"/><polygon points="1326.2,66.8 1335.3,72.3 1335.3,84.1 1326.2,78.7" fill="#fff"/><polygon points="1335.3,72.3 1347.3,68.7 1347.3,82.2 1335.3,84.1" fill="#fff"/><polygon points="1326.2,66.8 1337.8,63.0 1347.3,68.7 1347.3,82.2 1335.3,84.1 1326.2,78.7" fill="none" stroke="#2f2f2f" stroke-width="1.7" stroke-linejoin="round"/><polyline points="1326.2,66.8 1335.3,72.3 1347.3,68.7" fill="none" stroke="#2f2f2f" stroke-width="1.7" stroke-linejoin="round"/><line x1="1335.3" y1="72.3" x2="1335.3" y2="84.1" stroke="#2f2f2f" stroke-width="1.7"/><g fill="#a03a40" stroke="#6a2a2a" stroke-width="0.8"><circle cx="1325.4" cy="80.5" r="3"/><circle cx="1334.9" cy="87" r="3"/><circle cx="1348" cy="82.6" r="3"/></g><polygon points="1372.9,73.7 1388.5,68.0 1401.3,74.8 1385.7,79.3" fill="#fff"/><polygon points="1372.9,73.7 1385.7,79.3 1385.7,90.7 1372.9,83.9" fill="#fff"/><polygon points="1385.7,79.3 1401.3,74.8 1401.3,87.3 1385.7,90.7" fill="#fff"/><polygon points="1372.9,73.7 1388.5,68.0 1401.3,74.8 1401.3,87.3 1385.7,90.7 1372.9,83.9" fill="none" stroke="#2f2f2f" stroke-width="1.9" stroke-linejoin="round"/><polyline points="1372.9,73.7 1385.7,79.3 1401.3,74.8" fill="none" stroke="#2f2f2f" stroke-width="1.9" stroke-linejoin="round"/><line x1="1385.7" y1="79.3" x2="1385.7" y2="90.7" stroke="#2f2f2f" stroke-width="1.9"/><polygon points="1378.0,63.3 1387.6,59.3 1395.5,64.9 1385.9,67.3" fill="#fff"/><polygon points="1378.0,63.3 1385.9,67.3 1385.9,75.4 1378.0,71.4" fill="#fff"/><polygon points="1385.9,67.3 1395.5,64.9 1395.5,73.8 1385.9,75.4" fill="#fff"/><polygon points="1378.0,63.3 1387.6,59.3 1395.5,64.9 1395.5,73.8 1385.9,75.4 1378.0,71.4" fill="none" stroke="#2f2f2f" stroke-width="1.9" stroke-linejoin="round"/><polyline points="1378.0,63.3 1385.9,67.3 1395.5,64.9" fill="none" stroke="#2f2f2f" stroke-width="1.9" stroke-linejoin="round"/><line x1="1385.9" y1="67.3" x2="1385.9" y2="75.4" stroke="#2f2f2f" stroke-width="1.9"/><polygon points="1400.8,82.0 1397.8,83.3 1399.0,86.2 1396.1,85.0 1394.8,88.0 1393.5,85.0 1390.6,86.2 1391.8,83.3 1388.8,82.0 1391.8,80.7 1390.6,77.8 1393.5,79.0 1394.8,76.0 1396.1,79.0 1399.0,77.8 1397.8,80.7" fill="#f5a000"/><circle cx="1394.8" cy="82" r="3.0" fill="#ffb400"/><text x="1453" y="65.5" font-family="Liberation Sans" font-size="6.5" font-weight="bold" fill="#9a9a9a" textLength="31">CONCEPT</text><text x="1460" y="71.5" font-family="Liberation Sans" font-size="5.5" fill="#aaa" textLength="17">LASER</text><polygon points="1455,79 1470,74 1484,78 1484,84 1469,88 1455,84" fill="#e4e4e4" stroke="#a8a8a8" stroke-width="1"/><path d="M1455,79 L1469,83 L1484,78 M1469,83 V88" stroke="#a8a8a8" stroke-width="1" fill="none"/></svg>
<div class="t" style="top:95.62px;font-size:11.5px;line-height:11.5px;color:#353535;left:9.23px;transform:scaleX(0.9267);transform-origin:50% 0;">Create</div>
<div class="t" style="top:95.62px;font-size:11.5px;line-height:11.5px;color:#353535;left:50.62px;transform:scaleX(0.9843);transform-origin:50% 0;">Duplicate</div>
<div class="t" style="top:95.62px;font-size:11.5px;line-height:11.5px;color:#353535;left:118.79px;transform:scaleX(0.9075);transform-origin:50% 0;">Batch</div>
<div class="t" style="top:108.62px;font-size:11.5px;line-height:11.5px;color:#353535;left:109.52px;transform:scaleX(0.9947);transform-origin:50% 0;">Duplicate</div>
<div class="t" style="top:95.62px;font-size:11.5px;line-height:11.5px;color:#353535;left:176.24px;transform:scaleX(0.9386);transform-origin:50% 0;">Translate</div>
<div class="t" style="top:95.62px;font-size:11.5px;line-height:11.5px;color:#353535;left:229.95px;transform:scaleX(0.9619);transform-origin:50% 0;">Rotate</div>
<div class="t" style="top:95.62px;font-size:11.5px;line-height:11.5px;color:#353535;left:272.32px;transform:scaleX(0.8902);transform-origin:50% 0;">Rescale</div>
<div class="t" style="top:95.62px;font-size:11.5px;line-height:11.5px;color:#353535;left:323.08px;transform:scaleX(1.0422);transform-origin:50% 0;">Mirror</div>
<div class="t" style="top:95.62px;font-size:11.5px;line-height:11.5px;color:#353535;left:377.54px;transform:scaleX(1.0372);transform-origin:50% 0;">Hollow</div>
<div class="t" style="top:108.62px;font-size:11.5px;line-height:11.5px;color:#353535;left:384.25px;transform:scaleX(0.9102);transform-origin:50% 0;">Part</div>
<div class="t" style="top:95.62px;font-size:11.5px;line-height:11.5px;color:#353535;left:423.54px;transform:scaleX(1.0023);transform-origin:50% 0;">Cut or</div>
<div class="t" style="top:108.62px;font-size:11.5px;line-height:11.5px;color:#353535;left:422.90px;transform:scaleX(0.9629);transform-origin:50% 0;">Punch</div>
<div class="t" style="top:95.62px;font-size:11.5px;line-height:11.5px;color:#353535;left:465.63px;transform:scaleX(0.9973);transform-origin:50% 0;">Perforator</div>
<div class="t" style="top:95.62px;font-size:11.5px;line-height:11.5px;color:#353535;left:528.00px;transform:scaleX(1.0070);transform-origin:50% 0;">Hull and</div>
<div class="t" style="top:108.62px;font-size:11.5px;line-height:11.5px;color:#353535;left:536.63px;transform:scaleX(0.8942);transform-origin:50% 0;">Core</div>
<div class="t" style="top:95.62px;font-size:11.5px;line-height:11.5px;color:#353535;left:581.18px;transform:scaleX(0.9283);transform-origin:50% 0;">Surface</div>
<div class="t" style="top:108.62px;font-size:11.5px;line-height:11.5px;color:#353535;left:581.82px;transform:scaleX(1.0115);transform-origin:50% 0;">to Solid</div>
<div class="t" style="top:63.02px;font-size:11.5px;line-height:11.5px;color:#353535;left:656.8px;transform:scaleX(0.9435);transform-origin:0 0;">Extrude</div>
<div class="t" style="top:85.42px;font-size:11.5px;line-height:11.5px;color:#353535;left:656.8px;transform:scaleX(1.0142);transform-origin:0 0;">Offset</div>
<div class="t" style="top:107.02px;font-size:11.5px;line-height:11.5px;color:#353535;left:656.8px;transform:scaleX(1.0533);transform-origin:0 0;">Milling Offset</div>
<div class="t" style="top:95.62px;font-size:11.5px;line-height:11.5px;color:#9d9d9d;left:758.20px;transform:scaleX(0.9629);transform-origin:50% 0;">Merge</div>
<div class="t" style="top:108.62px;font-size:11.5px;line-height:11.5px;color:#9d9d9d;left:761.08px;transform:scaleX(0.8754);transform-origin:50% 0;">Parts</div>
<div class="t" style="top:95.62px;font-size:11.5px;line-height:11.5px;color:#9d9d9d;left:797.89px;transform:scaleX(0.9640);transform-origin:50% 0;">Boolean</div>
<div class="t" style="top:95.62px;font-size:11.5px;line-height:11.5px;color:#353535;left:851.34px;transform:scaleX(0.9257);transform-origin:50% 0;">Shells</div>
<div class="t" style="top:108.62px;font-size:11.5px;line-height:11.5px;color:#353535;left:845.91px;transform:scaleX(0.9197);transform-origin:50% 0;">To Parts</div>
<div class="t" style="top:95.62px;font-size:11.5px;line-height:11.5px;color:#353535;left:907.63px;transform:scaleX(0.9275);transform-origin:50% 0;">Label</div>
<div class="t" style="top:95.62px;font-size:11.5px;line-height:11.5px;color:#353535;left:962.15px;transform:scaleX(0.9219);transform-origin:50% 0;">Prop</div>
<div class="t" style="top:108.62px;font-size:11.5px;line-height:11.5px;color:#353535;left:945.85px;transform:scaleX(0.9946);transform-origin:50% 0;">Generation</div>
<div class="t" style="top:95.62px;font-size:11.5px;line-height:11.5px;color:#353535;left:1024.81px;transform:scaleX(0.9727);transform-origin:50% 0;">Honeycomb</div>
<div class="t" style="top:108.62px;font-size:11.5px;line-height:11.5px;color:#353535;left:1029.29px;transform:scaleX(0.9729);transform-origin:50% 0;">Structures</div>
<div class="t" style="top:95.62px;font-size:11.5px;line-height:11.5px;color:#353535;left:1095.79px;transform:scaleX(0.9748);transform-origin:50% 0;">Structures</div>
<div class="t" style="top:95.62px;font-size:11.5px;line-height:11.5px;color:#353535;left:1155.73px;transform:scaleX(0.9122);transform-origin:50% 0;">Slice Based</div>
<div class="t" style="top:108.62px;font-size:11.5px;line-height:11.5px;color:#353535;left:1159.89px;transform:scaleX(0.9748);transform-origin:50% 0;">Structures</div>
<div class="t" style="top:95.62px;font-size:11.5px;line-height:11.5px;color:#353535;left:1222.69px;transform:scaleX(0.9464);transform-origin:50% 0;">DSM Somos®</div>
<div class="t" style="top:108.62px;font-size:11.5px;line-height:11.5px;color:#353535;left:1227.88px;transform:scaleX(0.9307);transform-origin:50% 0;">TetraShell™</div>
<div class="t" style="top:95.62px;font-size:11.5px;line-height:11.5px;color:#353535;left:1318.00px;transform:scaleX(1.0282);transform-origin:50% 0;">Rapidfit</div>
<div class="t" style="top:95.62px;font-size:11.5px;line-height:11.5px;color:#353535;left:1367.70px;transform:scaleX(0.9568);transform-origin:50% 0;">FormFit</div>
<div class="t" style="top:95.62px;font-size:11.5px;line-height:11.5px;color:#a5a5a5;left:1427.01px;transform:scaleX(0.9517);transform-origin:50% 0;">Remove Volume</div>
<div class="t" style="top:108.62px;font-size:11.5px;line-height:11.5px;color:#a5a5a5;left:1451.31px;transform:scaleX(0.9782);transform-origin:50% 0;">Wizard</div>
<div class="t" style="top:126.62px;font-size:11.5px;line-height:11.5px;color:#353535;left:69.43px;transform:scaleX(0.9151);transform-origin:50% 0;">Create</div>
<div class="t" style="top:126.62px;font-size:11.5px;line-height:11.5px;color:#353535;left:247.54px;transform:scaleX(1.0044);transform-origin:50% 0;">Position</div>
<div class="t" style="top:126.62px;font-size:11.5px;line-height:11.5px;color:#353535;left:547.29px;transform:scaleX(0.9633);transform-origin:50% 0;">Edit</div>
<div class="t" style="top:126.62px;font-size:11.5px;line-height:11.5px;color:#353535;left:779.56px;transform:scaleX(0.9992);transform-origin:50% 0;">Merge &amp; Boolean</div>
<div class="t" style="top:126.62px;font-size:11.5px;line-height:11.5px;color:#353535;left:933.42px;transform:scaleX(0.9572);transform-origin:50% 0;">Generate</div>
<div class="t" style="top:126.62px;font-size:11.5px;line-height:11.5px;color:#353535;left:1134.79px;transform:scaleX(0.9748);transform-origin:50% 0;">Structures</div>
<div class="t" style="top:126.62px;font-size:11.5px;line-height:11.5px;color:#353535;left:1341.51px;transform:scaleX(0.9671);transform-origin:50% 0;">Fit2Ship</div>
<div class="t" style="top:126.62px;font-size:11.5px;line-height:11.5px;color:#353535;left:1434.00px;transform:scaleX(0.9559);transform-origin:50% 0;">Concept Laser</div>
<div class="a" style="left:0px;top:143px;width:1528px;height:35px;background:#fff"></div>
<svg class="a" style="left:0px;top:0px;" width="1528" height="180" viewBox="0 0 1528 180"><rect x="4" y="149" width="2" height="2" fill="#222"/><rect x="4" y="153" width="2" height="2" fill="#222"/><rect x="4" y="157" width="2" height="2" fill="#222"/><rect x="4" y="161" width="2" height="2" fill="#222"/><rect x="4" y="165" width="2" height="2" fill="#222"/><rect x="4" y="169" width="2" height="2" fill="#222"/><rect x="4" y="173" width="2" height="2" fill="#222"/><rect x="136" y="148" width="1" height="26" fill="#e6e6e6"/><rect x="235" y="148" width="1" height="26" fill="#e6e6e6"/><rect x="396" y="148" width="1" height="26" fill="#e6e6e6"/><rect x="587" y="148" width="1" height="26" fill="#e6e6e6"/><rect x="718" y="148" width="1" height="26" fill="#e6e6e6"/><rect x="848" y="148" width="1" height="26" fill="#e6e6e6"/><polygon points="15.5,172.4 24.5,149.1 35.2,166" fill="#8cc05a" stroke="#2e5a1e" stroke-width="1.6" stroke-linejoin="round"/><polygon points="27.5,160.5 27.5,173.7 30.6,170.8 33.0,175.6 35.2,174.5 32.8,169.9 36.9,169.9" fill="#2a2a2a" stroke="#fff" stroke-width="0.6"/><polygon points="47.5,155.2 65,149 65,170 47.5,172.4" fill="#8cc05a" stroke="#2e5a1e" stroke-width="1.6" stroke-linejoin="round"/><polygon points="59.0,159.5 59.0,172.7 62.1,169.8 64.5,174.6 66.7,173.5 64.3,168.9 68.4,168.9" fill="#2a2a2a" stroke="#fff" stroke-width="0.6"/><path d="M75.5,172.4 C76,163 82,160 86,156 C89,152 90,150 99,149.5 C98,156 96,160 92,165 C89,169 87,172 86,172.4 Z" fill="#8cc05a" stroke="#2e5a1e" stroke-width="1.6" stroke-linejoin="round"/><polygon points="90.0,159.5 90.0,172.7 93.1,169.8 95.5,174.6 97.7,173.5 95.3,168.9 99.4,168.9" fill="#2a2a2a" stroke="#fff" stroke-width="0.6"/><path d="M109,172 C103,166 105,150 118,149.5 C131,150 133,166 127,172 Z" fill="#8cc05a" stroke="#2e5a1e" stroke-width="1.6" stroke-linejoin="round"/><path d="M114,151 C112,158 113,166 115,172 M121,151 C124,158 124,166 122,172" stroke="#2e5a1e" stroke-width="1.2" fill="none"/><polygon points="121.0,162.5 121.0,175.7 124.1,172.8 126.5,177.6 128.7,176.5 126.3,171.9 130.4,171.9" fill="#2a2a2a" stroke="#fff" stroke-width="0.6"/><rect x="143.5" y="152.4" width="23.5" height="17.6" fill="#8cc05a" stroke="#2e5a1e" stroke-width="1.6" stroke-linejoin="round"/><path d="M157.5,161.5 L166.6,170.6" stroke="#3a3a3a" stroke-width="5.2" stroke-linecap="round"/><path d="M158.1,162.1 L166.6,170.6" stroke="#fff" stroke-width="3" stroke-linecap="round"/><circle cx="180.5" cy="165" r="6.8" fill="#8cc05a" stroke="#2e5a1e" stroke-width="1.6" stroke-linejoin="round"/><circle cx="191" cy="154.5" r="6.3" fill="#8cc05a" stroke="#2e5a1e" stroke-width="1.6" stroke-linejoin="round"/><path d="M183,159 L187,160" stroke="#8cc05a" stroke-width="4"/><path d="M188,161 L197.1,170.1" stroke="#3a3a3a" stroke-width="5.2" stroke-linecap="round"/><path d="M188.6,161.6 L197.1,170.1" stroke="#fff" stroke-width="3" stroke-linecap="round"/><path d="M205.5,171 C214,171 216,166 219,160 C221,155 224,151 228.5,150" stroke="#2e5a1e" stroke-width="4.4" fill="none" stroke-linecap="round"/><path d="M205.5,171 C214,171 216,166 219,160 C221,155 224,151 228.5,150" stroke="#8fa878" stroke-width="2.2" fill="none" stroke-linecap="round"/><path d="M218,162 L227.1,171.1" stroke="#3a3a3a" stroke-width="5.2" stroke-linecap="round"/><path d="M218.6,162.6 L227.1,171.1" stroke="#fff" stroke-width="3" stroke-linecap="round"/><rect x="242.5" y="152.5" width="23" height="19.5" fill="#8cc05a" stroke="#2e5a1e" stroke-width="1.6" stroke-linejoin="round"/><path d="M243,153 L248,172 L253,153 L258,172 L263,153" stroke="#2e5a1e" stroke-width="1.2" fill="none"/><path d="M256,161.5 L265.1,170.6" stroke="#3a3a3a" stroke-width="5.2" stroke-linecap="round"/><path d="M256.6,162.1 L265.1,170.6" stroke="#fff" stroke-width="3" stroke-linecap="round"/><circle cx="280" cy="166" r="7" fill="#8cc05a" stroke="#2e5a1e" stroke-width="1.6" stroke-linejoin="round"/><circle cx="290" cy="156" r="7" fill="#8cc05a" stroke="#2e5a1e" stroke-width="1.6" stroke-linejoin="round"/><path d="M283,160 L287,162" stroke="#8cc05a" stroke-width="4"/><path d="M275,166 L285,166 M290,150 L293,158" stroke="#2e5a1e" stroke-width="1"/><path d="M287,162 L296.1,171.1" stroke="#3a3a3a" stroke-width="5.2" stroke-linecap="round"/><path d="M287.6,162.6 L296.1,171.1" stroke="#fff" stroke-width="3" stroke-linecap="round"/><polygon points="304,156 312,152 314,158 322,149 327.9,156 320,161 326,168 318,173 313,166 309,172 304,166 309,161" fill="#8cc05a" stroke="#2e5a1e" stroke-width="1.6" stroke-linejoin="round"/><path d="M306,159 L325,167 M311,150 L318,172 M304,166 L327,156" stroke="#2e5a1e" stroke-width="1"/><path d="M318,162 L327.1,171.1" stroke="#3a3a3a" stroke-width="5.2" stroke-linecap="round"/><path d="M318.6,162.6 L327.1,171.1" stroke="#fff" stroke-width="3" stroke-linecap="round"/><circle cx="347" cy="161" r="11.8" fill="#8cc05a" stroke="#2e5a1e" stroke-width="1.6" stroke-linejoin="round"/><path d="M347,149.5 V172.5 M335.5,161 H358.5 M339,153 L355,169 M355,153 L339,169" stroke="#2e5a1e" stroke-width="1"/><path d="M349,161.5 L358.1,170.6" stroke="#3a3a3a" stroke-width="5.2" stroke-linecap="round"/><path d="M349.6,162.1 L358.1,170.6" stroke="#fff" stroke-width="3" stroke-linecap="round"/><ellipse cx="380" cy="161" rx="9.6" ry="11.8" fill="#8cc05a" stroke="#2e5a1e" stroke-width="1.6" stroke-linejoin="round"/><path d="M380,149.5 V172.5 M370.5,161 H389.5 M373,153 L387,169 M387,153 L373,169" stroke="#2e5a1e" stroke-width="1"/><path d="M382,161.5 L391.1,170.6" stroke="#3a3a3a" stroke-width="5.2" stroke-linecap="round"/><path d="M382.6,162.1 L391.1,170.6" stroke="#fff" stroke-width="3" stroke-linecap="round"/><polygon points="404.0,154.2 414.8,149.0 425.5,154.2 413.7,158.9" fill="#8cc05a"/><polygon points="404.0,154.2 413.7,158.9 413.7,172.5 404.0,167.3" fill="#fff"/><polygon points="413.7,158.9 425.5,154.2 425.5,167.8 413.7,172.5" fill="#fff"/><polygon points="404.0,154.2 414.8,149.0 425.5,154.2 425.5,167.8 413.7,172.5 404.0,167.3" fill="none" stroke="#333" stroke-width="1.6" stroke-linejoin="round"/><polyline points="404.0,154.2 413.7,158.9 425.5,154.2" fill="none" stroke="#333" stroke-width="1.6" stroke-linejoin="round"/><line x1="413.7" y1="158.9" x2="413.7" y2="172.5" stroke="#333" stroke-width="1.6"/><polygon points="416.0,160.0 416.0,173.2 419.1,170.3 421.5,175.1 423.7,174.0 421.3,169.4 425.4,169.4" fill="#2a2a2a" stroke="#fff" stroke-width="0.6"/><polygon points="435.3,154.2 446.1,149.0 456.8,154.2 445.0,158.9" fill="#fff"/><polygon points="435.3,154.2 445.0,158.9 445.0,172.5 435.3,167.3" fill="#8cc05a"/><polygon points="445.0,158.9 456.8,154.2 456.8,167.8 445.0,172.5" fill="#8cc05a"/><polygon points="435.3,154.2 446.1,149.0 456.8,154.2 456.8,167.8 445.0,172.5 435.3,167.3" fill="none" stroke="#333" stroke-width="1.6" stroke-linejoin="round"/><polyline points="435.3,154.2 445.0,158.9 456.8,154.2" fill="none" stroke="#333" stroke-width="1.6" stroke-linejoin="round"/><line x1="445.0" y1="158.9" x2="445.0" y2="172.5" stroke="#333" stroke-width="1.6"/><polygon points="447.0,160.0 447.0,173.2 450.1,170.3 452.5,175.1 454.7,174.0 452.3,169.4 456.4,169.4" fill="#2a2a2a" stroke="#fff" stroke-width="0.6"/><polygon points="466.7,154.2 476.9,149.0 487.2,154.2 475.9,158.9" fill="#f0a020"/><polygon points="466.7,154.2 475.9,158.9 475.9,172.5 466.7,167.3" fill="#2f88e0"/><polygon points="475.9,158.9 487.2,154.2 487.2,167.8 475.9,172.5" fill="#8cc05a"/><polygon points="466.7,154.2 476.9,149.0 487.2,154.2 487.2,167.8 475.9,172.5 466.7,167.3" fill="none" stroke="#333" stroke-width="1.6" stroke-linejoin="round"/><polyline points="466.7,154.2 475.9,158.9 487.2,154.2" fill="none" stroke="#333" stroke-width="1.6" stroke-linejoin="round"/><line x1="475.9" y1="158.9" x2="475.9" y2="172.5" stroke="#333" stroke-width="1.6"/><polygon points="478.0,160.0 478.0,173.2 481.1,170.3 483.5,175.1 485.7,174.0 483.3,169.4 487.4,169.4" fill="#2a2a2a" stroke="#fff" stroke-width="0.6"/><polygon points="497.5,154.2 508.2,149.0 519.0,154.2 507.2,158.9" fill="#fff"/><polygon points="497.5,154.2 507.2,158.9 507.2,172.5 497.5,167.3" fill="#fff"/><polygon points="507.2,158.9 519.0,154.2 519.0,167.8 507.2,172.5" fill="#fff"/><polygon points="497.5,154.2 508.2,149.0 519.0,154.2 519.0,167.8 507.2,172.5 497.5,167.3" fill="none" stroke="#aaa" stroke-width="1.6" stroke-linejoin="round"/><polyline points="497.5,154.2 507.2,158.9 519.0,154.2" fill="none" stroke="#aaa" stroke-width="1.6" stroke-linejoin="round"/><line x1="507.2" y1="158.9" x2="507.2" y2="172.5" stroke="#aaa" stroke-width="1.6"/><polygon points="509.0,160.0 509.0,173.2 512.1,170.3 514.5,175.1 516.7,174.0 514.3,169.4 518.4,169.4" fill="#999" stroke="#fff" stroke-width="0.6"/><polygon points="528.3,154.2 539.0,149.0 549.8,154.2 538.0,158.9" fill="#fff"/><polygon points="528.3,154.2 538.0,158.9 538.0,172.5 528.3,167.3" fill="#fff"/><polygon points="538.0,158.9 549.8,154.2 549.8,167.8 538.0,172.5" fill="#fff"/><polygon points="528.3,154.2 539.0,149.0 549.8,154.2 549.8,167.8 538.0,172.5 528.3,167.3" fill="none" stroke="#333" stroke-width="1.6" stroke-linejoin="round"/><polyline points="528.3,154.2 538.0,158.9 549.8,154.2" fill="none" stroke="#333" stroke-width="1.6" stroke-linejoin="round"/><line x1="538.0" y1="158.9" x2="538.0" y2="172.5" stroke="#333" stroke-width="1.6"/><polygon points="535,158 541,155 544,162 538,166" fill="#d04040"/><polygon points="541.0,160.0 541.0,173.2 544.1,170.3 546.5,175.1 548.7,174.0 546.3,169.4 550.4,169.4" fill="#2a2a2a" stroke="#fff" stroke-width="0.6"/><polygon points="559.7,154.2 570.2,149.0 580.7,154.2 569.2,158.9" fill="#8cc05a"/><polygon points="559.7,154.2 569.2,158.9 569.2,172.5 559.7,167.3" fill="#8cc05a"/><polygon points="569.2,158.9 580.7,154.2 580.7,167.8 569.2,172.5" fill="#8cc05a"/><polygon points="559.7,154.2 570.2,149.0 580.7,154.2 580.7,167.8 569.2,172.5 559.7,167.3" fill="none" stroke="#2e5a1e" stroke-width="1.6" stroke-linejoin="round"/><polyline points="559.7,154.2 569.2,158.9 580.7,154.2" fill="none" stroke="#2e5a1e" stroke-width="1.6" stroke-linejoin="round"/><line x1="569.2" y1="158.9" x2="569.2" y2="172.5" stroke="#2e5a1e" stroke-width="1.6"/><circle cx="565" cy="164" r="2" fill="none" stroke="#2e5a1e"/><polygon points="571.0,160.0 571.0,173.2 574.1,170.3 576.5,175.1 578.7,174.0 576.3,169.4 580.4,169.4" fill="#2a2a2a" stroke="#fff" stroke-width="0.6"/><polygon points="597.5,172.5 607,149 616.5,167" fill="#cfcfcf" stroke="#8a8a8a" stroke-width="1.5" stroke-linejoin="round"/><polygon points="609.0,161.0 609.0,174.2 612.1,171.3 614.5,176.1 616.7,175.0 614.3,170.4 618.4,170.4" fill="#777" stroke="#fff" stroke-width="0.6"/><polygon points="628.5,172.5 638,149 646,166" fill="#cfcfcf" stroke="#8a8a8a" stroke-width="1.5" stroke-linejoin="round"/><polygon points="632,169 638,155 642,165" fill="none" stroke="#8a8a8a" stroke-width="1.2"/><path d="M640,150 L649,149 L646,156" fill="#aaa"/><polygon points="660,172.5 669,149 677,166" fill="#cfcfcf" stroke="#8a8a8a" stroke-width="1.5" stroke-linejoin="round"/><polygon points="664,169 669,156 673,166" fill="none" stroke="#8a8a8a" stroke-width="1.2"/><path d="M672,158 L681,152 L681,160 Z" fill="#aaa"/><polygon points="688.5,172.5 697,150 705,166" fill="#c8c8b8" stroke="#333" stroke-width="1.5" stroke-linejoin="round"/><polygon points="692,172.5 701,150 709,166" fill="#8cc05a" stroke="#2e3e2e" stroke-width="1.5" stroke-linejoin="round"/><circle cx="707" cy="166" r="4.5" fill="#2f88e0"/><path d="M701,170 L705,172" stroke="#2f88e0" stroke-width="2.5"/><polygon points="727.5,172.5 736.5,149 746,166" fill="#8cc05a" stroke="#2e5a1e" stroke-width="1.6" stroke-linejoin="round"/><path d="M738,160 L749,172 M749,160 L738,172" stroke="#e53030" stroke-width="2.4"/><polygon points="756,172.5 765,149 773,166" fill="#d8d8d8" stroke="#aaa" stroke-width="1.2"/><polygon points="760,172.5 769,149 778,167" fill="#cfcfcf" stroke="#8a8a8a" stroke-width="1.5" stroke-linejoin="round"/><path d="M770,165 L780,160 L780,170 L772,172 Z" fill="#aaa"/><polygon points="789.5,172.5 799,149 808,166" fill="#cfcfcf" stroke="#8a8a8a" stroke-width="1.5" stroke-linejoin="round"/><rect x="800" y="160" width="7" height="10" fill="#fff" stroke="#888" stroke-width="1"/><rect x="804" y="165" width="7" height="7" fill="#eee" stroke="#888" stroke-width="1"/><polygon points="818,172 826,150 842,149 834,170" fill="#cfcfcf" stroke="#8a8a8a" stroke-width="1.5" stroke-linejoin="round"/><path d="M826,150 L838,167" stroke="#999" stroke-width="1"/><polygon points="857.5,172.5 867,149 876,166" fill="#fff" stroke="#777" stroke-width="1.3" stroke-linejoin="round"/><ellipse cx="872" cy="167" rx="5" ry="3" fill="#eee" stroke="#888" stroke-width="1"/><polygon points="886.5,172.5 896,149 904,166" fill="#fff" stroke="#333" stroke-width="1.5" stroke-linejoin="round"/><polygon points="890.5,172.5 900,149 908,166" fill="#ccc" stroke="#333" stroke-width="1.5" stroke-linejoin="round"/><path d="M900,150 C906,149 910,153 909,158" stroke="#2f88e0" stroke-width="3" fill="none"/><circle cx="904" cy="167" r="4.5" fill="#2f88e0"/><polygon points="919.5,172.5 929,149 938,166" fill="#c8c8c8" stroke="#333" stroke-width="1.5" stroke-linejoin="round"/><ellipse cx="933" cy="167" rx="6" ry="4" fill="#2f88e0"/><circle cx="933" cy="167" r="1.5" fill="#fff"/><polygon points="949,172.5 954,149.5 972.5,149.5 967,172.5" fill="#cfcfcf" stroke="#8a8a8a" stroke-width="1.5" stroke-linejoin="round"/><path d="M954,150 L967,172 M960,150 L972,160" stroke="#999" stroke-width="1"/></svg>
<div class="a" style="left:0px;top:178px;width:1528px;height:808px;background:#bedff7"></div>
<div class="a" style="left:0px;top:178px;width:1528px;height:1px;background:#c6dae8"></div>
<svg class="a" style="left:0px;top:0px;" width="1528" height="1038" viewBox="0 0 1528 1038"><defs><pattern id="pv" width="6.6" height="6.6" patternUnits="userSpaceOnUse" patternTransform="rotate(25)"><rect width="6.6" height="6.6" fill="#4a4c52"/><circle cx="3.3" cy="3.3" r="2.5" fill="#45474d" stroke="#928e88" stroke-width="0.95"/><circle cx="3.3" cy="3.3" r="0.8" fill="#dcdcdc"/></pattern><radialGradient id="lf" cx="45%" cy="40%" r="65%"><stop offset="0" stop-color="#a6a6a6"/><stop offset="0.7" stop-color="#8e8e8e"/><stop offset="1" stop-color="#6a6d72"/></radialGradient></defs><path d="M386,318 C375,336 377,360 385,375 C390,385 394,392 397,398" stroke="#3a3f48" stroke-width="7.3" fill="none" stroke-linecap="round"/><path d="M386,318 C375,336 377,360 385,375 C390,385 394,392 397,398" stroke="#a4a4a4" stroke-width="5.5" fill="none" stroke-linecap="round"/><path d="M359.5,349 L359.5,364" stroke="#3a3f48" stroke-width="6.3" fill="none" stroke-linecap="round"/><path d="M359.5,349 L359.5,364" stroke="#a4a4a4" stroke-width="4.5" fill="none" stroke-linecap="round"/><path d="M389,314 C400,304 422,303 432,318 C450,334 458,350 455,366 C452,384 436,393 415,393 C408,393 402,392 397,390" stroke="#2f353f" stroke-width="9.8" fill="none" stroke-linecap="round"/><path d="M389,314 C400,304 422,303 432,318 C450,334 458,350 455,366 C452,384 436,393 415,393 C408,393 402,392 397,390" stroke="#4e5157" stroke-width="8.0" fill="none" stroke-linecap="round"/><path d="M389,314 C400,304 422,303 432,318 C450,334 458,350 455,366 C452,384 436,393 415,393 C408,393 402,392 397,390" stroke="#84807a" stroke-width="5.60" fill="none" stroke-linecap="round" stroke-dasharray="0 6.56"/><path d="M389,314 C400,304 422,303 432,318 C450,334 458,350 455,366 C452,384 436,393 415,393 C408,393 402,392 397,390" stroke="#45474d" stroke-width="3.84" fill="none" stroke-linecap="round" stroke-dasharray="0 6.56"/><path d="M389,314 C400,304 422,303 432,318 C450,334 458,350 455,366 C452,384 436,393 415,393 C408,393 402,392 397,390" stroke="#e0e0e0" stroke-width="1.3" fill="none" stroke-linecap="round" stroke-dasharray="0 6.56"/><path d="M392,307.5 A19,17.5 0 1 1 430,307.5 A19,17.5 0 1 1 392,307.5 Z" stroke="#2f353f" stroke-width="10.3" fill="none" stroke-linecap="round"/><path d="M392,307.5 A19,17.5 0 1 1 430,307.5 A19,17.5 0 1 1 392,307.5 Z" stroke="#4e5157" stroke-width="8.5" fill="none" stroke-linecap="round"/><path d="M392,307.5 A19,17.5 0 1 1 430,307.5 A19,17.5 0 1 1 392,307.5 Z" stroke="#84807a" stroke-width="5.95" fill="none" stroke-linecap="round" stroke-dasharray="0 6.97"/><path d="M392,307.5 A19,17.5 0 1 1 430,307.5 A19,17.5 0 1 1 392,307.5 Z" stroke="#45474d" stroke-width="4.08" fill="none" stroke-linecap="round" stroke-dasharray="0 6.97"/><path d="M392,307.5 A19,17.5 0 1 1 430,307.5 A19,17.5 0 1 1 392,307.5 Z" stroke="#e0e0e0" stroke-width="1.3" fill="none" stroke-linecap="round" stroke-dasharray="0 6.97"/><path d="M392,311 C400,304 422,304 430,311" stroke="#2f353f" stroke-width="8.8" fill="none" stroke-linecap="round"/><path d="M392,311 C400,304 422,304 430,311" stroke="#4e5157" stroke-width="7.0" fill="none" stroke-linecap="round"/><path d="M392,311 C400,304 422,304 430,311" stroke="#84807a" stroke-width="4.90" fill="none" stroke-linecap="round" stroke-dasharray="0 5.74"/><path d="M392,311 C400,304 422,304 430,311" stroke="#45474d" stroke-width="3.36" fill="none" stroke-linecap="round" stroke-dasharray="0 5.74"/><path d="M392,311 C400,304 422,304 430,311" stroke="#e0e0e0" stroke-width="1.3" fill="none" stroke-linecap="round" stroke-dasharray="0 5.74"/><path d="M388.0,314.5 L386.6,313.7 L385.1,313.1 L383.5,312.6 L381.9,312.3 L380.2,312.1 L378.4,312.0 L376.7,312.1 L374.9,312.3 L373.2,312.7 L371.5,313.2 L369.8,313.9 L368.1,314.6 L366.4,315.5 L364.8,316.5 L363.3,317.6 L361.7,318.8 L360.3,320.1 L358.8,321.5 L357.5,323.0 L356.1,324.6 L354.9,326.2 L353.6,327.9 L352.4,329.7 L351.3,331.6 L350.0,334.6 L349.5,337.8 L349.9,341.0 L351.1,344.1 L353.0,346.7 L355.6,348.7 L358.6,350.0 L361.8,350.5 L365.0,350.1 L368.1,348.9 L370.7,347.0 L372.7,344.4 L373.6,343.0 L374.4,341.7 L375.2,340.4 L376.0,339.2 L376.7,338.1 L377.4,337.0 L378.1,335.9 L378.7,334.9 L379.3,334.0 L379.9,333.1 L380.4,332.2 L380.9,331.4 L381.4,330.5 L381.9,329.7 L382.4,328.9 L382.8,328.1 L383.3,327.3 L383.8,326.5 L384.3,325.7 L384.9,324.8 L385.6,324.0 L386.3,323.2 L387.1,322.3 L388.0,321.5 Z" fill="url(#lf)" stroke="#3f444c" stroke-width="1.2"/><path d="M386.5,322.4 L386.0,324.1 L385.5,325.8 L385.1,327.6 L384.8,329.3 L384.6,331.1 L384.4,332.9 L384.3,334.7 L384.3,336.4 L384.4,338.2 L384.6,340.0 L384.8,341.7 L385.2,343.5 L385.6,345.3 L386.0,347.0 L386.6,348.7 L387.2,350.4 L387.9,352.1 L388.6,353.8 L389.4,355.4 L390.3,357.0 L391.2,358.6 L392.2,360.2 L393.3,361.7 L394.4,363.2 L396.6,365.4 L399.3,367.0 L402.3,367.9 L405.4,367.9 L408.5,367.1 L411.2,365.6 L413.4,363.4 L415.0,360.7 L415.9,357.7 L415.9,354.6 L415.1,351.5 L413.6,348.8 L412.7,347.6 L411.9,346.5 L411.0,345.3 L410.2,344.2 L409.3,343.1 L408.5,342.0 L407.7,340.9 L406.8,339.8 L406.0,338.7 L405.1,337.6 L404.2,336.6 L403.3,335.5 L402.4,334.4 L401.5,333.3 L400.6,332.2 L399.7,331.1 L398.7,330.0 L397.7,328.9 L396.7,327.7 L395.7,326.6 L394.7,325.4 L393.6,324.1 L392.6,322.9 L391.5,321.6 Z" fill="url(#lf)" stroke="#3f444c" stroke-width="1.2"/><circle cx="362.4" cy="379.5" r="18.4" fill="url(#pv)" stroke="#2f353f" stroke-width="1.6"/><circle cx="396.3" cy="416.5" r="18.4" fill="url(#pv)" stroke="#2f353f" stroke-width="1.6"/><path d="M549,324 C556,340 553,364 545,376 C539,386 535,394 533,401" stroke="#3a3f48" stroke-width="7.3" fill="none" stroke-linecap="round"/><path d="M549,324 C556,340 553,364 545,376 C539,386 535,394 533,401" stroke="#a4a4a4" stroke-width="5.5" fill="none" stroke-linecap="round"/><path d="M573.7,354 L573.7,367" stroke="#3a3f48" stroke-width="6.3" fill="none" stroke-linecap="round"/><path d="M573.7,354 L573.7,367" stroke="#a4a4a4" stroke-width="4.5" fill="none" stroke-linecap="round"/><path d="M546,316 C535,305 515,305 502,314 C484,326 476,345 477,361 C479,385 495,398 512,398 C520,398 527,398 533,397" stroke="#2f353f" stroke-width="9.8" fill="none" stroke-linecap="round"/><path d="M546,316 C535,305 515,305 502,314 C484,326 476,345 477,361 C479,385 495,398 512,398 C520,398 527,398 533,397" stroke="#4e5157" stroke-width="8.0" fill="none" stroke-linecap="round"/><path d="M546,316 C535,305 515,305 502,314 C484,326 476,345 477,361 C479,385 495,398 512,398 C520,398 527,398 533,397" stroke="#84807a" stroke-width="5.60" fill="none" stroke-linecap="round" stroke-dasharray="0 6.56"/><path d="M546,316 C535,305 515,305 502,314 C484,326 476,345 477,361 C479,385 495,398 512,398 C520,398 527,398 533,397" stroke="#45474d" stroke-width="3.84" fill="none" stroke-linecap="round" stroke-dasharray="0 6.56"/><path d="M546,316 C535,305 515,305 502,314 C484,326 476,345 477,361 C479,385 495,398 512,398 C520,398 527,398 533,397" stroke="#e0e0e0" stroke-width="1.3" fill="none" stroke-linecap="round" stroke-dasharray="0 6.56"/><path d="M505.5,310.5 A18.5,18.5 0 1 1 542.5,310.5 A18.5,18.5 0 1 1 505.5,310.5 Z" stroke="#2f353f" stroke-width="10.3" fill="none" stroke-linecap="round"/><path d="M505.5,310.5 A18.5,18.5 0 1 1 542.5,310.5 A18.5,18.5 0 1 1 505.5,310.5 Z" stroke="#4e5157" stroke-width="8.5" fill="none" stroke-linecap="round"/><path d="M505.5,310.5 A18.5,18.5 0 1 1 542.5,310.5 A18.5,18.5 0 1 1 505.5,310.5 Z" stroke="#84807a" stroke-width="5.95" fill="none" stroke-linecap="round" stroke-dasharray="0 6.97"/><path d="M505.5,310.5 A18.5,18.5 0 1 1 542.5,310.5 A18.5,18.5 0 1 1 505.5,310.5 Z" stroke="#45474d" stroke-width="4.08" fill="none" stroke-linecap="round" stroke-dasharray="0 6.97"/><path d="M505.5,310.5 A18.5,18.5 0 1 1 542.5,310.5 A18.5,18.5 0 1 1 505.5,310.5 Z" stroke="#e0e0e0" stroke-width="1.3" fill="none" stroke-linecap="round" stroke-dasharray="0 6.97"/><path d="M506,314 C514,307 534,307 542,314" stroke="#2f353f" stroke-width="8.8" fill="none" stroke-linecap="round"/><path d="M506,314 C514,307 534,307 542,314" stroke="#4e5157" stroke-width="7.0" fill="none" stroke-linecap="round"/><path d="M506,314 C514,307 534,307 542,314" stroke="#84807a" stroke-width="4.90" fill="none" stroke-linecap="round" stroke-dasharray="0 5.74"/><path d="M506,314 C514,307 534,307 542,314" stroke="#45474d" stroke-width="3.36" fill="none" stroke-linecap="round" stroke-dasharray="0 5.74"/><path d="M506,314 C514,307 534,307 542,314" stroke="#e0e0e0" stroke-width="1.3" fill="none" stroke-linecap="round" stroke-dasharray="0 5.74"/><path d="M547.0,325.5 L547.9,326.3 L548.7,327.2 L549.3,328.0 L549.9,328.8 L550.4,329.7 L550.9,330.5 L551.3,331.3 L551.6,332.0 L552.0,332.8 L552.3,333.6 L552.7,334.4 L553.1,335.2 L553.5,336.0 L553.9,336.9 L554.3,337.8 L554.8,338.7 L555.3,339.7 L555.9,340.7 L556.4,341.8 L557.0,343.0 L557.7,344.2 L558.3,345.5 L559.0,346.9 L559.7,348.4 L561.5,351.1 L563.9,353.3 L566.8,354.8 L570.0,355.5 L573.3,355.3 L576.4,354.3 L579.1,352.5 L581.3,350.1 L582.8,347.2 L583.5,344.0 L583.3,340.7 L582.3,337.6 L581.3,335.7 L580.3,333.8 L579.2,331.9 L578.1,330.2 L576.9,328.5 L575.6,326.9 L574.3,325.4 L573.0,324.0 L571.6,322.7 L570.1,321.4 L568.5,320.3 L566.9,319.3 L565.3,318.4 L563.6,317.7 L561.9,317.1 L560.2,316.6 L558.4,316.3 L556.6,316.2 L554.9,316.2 L553.2,316.3 L551.5,316.6 L549.9,317.1 L548.4,317.7 L547.0,318.5 Z" fill="url(#lf)" stroke="#3f444c" stroke-width="1.2"/><path d="M544.6,327.5 L543.4,328.7 L542.3,329.9 L541.1,331.1 L540.0,332.2 L539.0,333.3 L537.9,334.4 L536.9,335.4 L535.9,336.4 L534.9,337.4 L533.9,338.4 L532.9,339.4 L532.0,340.3 L531.0,341.3 L530.1,342.2 L529.2,343.2 L528.3,344.1 L527.4,345.1 L526.5,346.0 L525.7,347.0 L524.8,347.9 L523.9,348.9 L523.0,349.9 L522.1,350.8 L521.2,351.8 L519.4,354.4 L518.3,357.3 L518.0,360.4 L518.5,363.5 L519.8,366.4 L521.8,368.8 L524.4,370.6 L527.3,371.7 L530.4,372.0 L533.5,371.5 L536.4,370.2 L538.8,368.2 L540.0,366.8 L541.2,365.4 L542.3,364.0 L543.4,362.5 L544.4,361.0 L545.3,359.5 L546.2,357.9 L547.0,356.3 L547.7,354.7 L548.4,353.0 L549.0,351.4 L549.5,349.7 L550.0,347.9 L550.3,346.2 L550.6,344.5 L550.8,342.7 L550.9,340.9 L551.0,339.1 L550.9,337.4 L550.8,335.6 L550.6,333.8 L550.3,332.1 L549.9,330.3 L549.4,328.5 Z" fill="url(#lf)" stroke="#3f444c" stroke-width="1.2"/><circle cx="568.3" cy="384.9" r="18.4" fill="url(#pv)" stroke="#2f353f" stroke-width="1.6"/><circle cx="532.1" cy="421.1" r="18.4" fill="url(#pv)" stroke="#2f353f" stroke-width="1.6"/><polygon points="448.6,456.3 488.5,456.3 472,536.5 462,536.5" fill="#9c9c9c" stroke="#2f353f" stroke-width="1.8" stroke-linejoin="round"/><polygon points="454.5,461.5 483,461.5 469,529 465,529" fill="#c8e0f2" stroke="#2f353f" stroke-width="1.2"/><clipPath id="bc"><polygon points="455,461.5 482.5,461.5 469,528 465,528"/></clipPath><g clip-path="url(#bc)"><path d="M450,450 L490,466" stroke="#2f353f" stroke-width="4.6"/><path d="M450,450 L490,466" stroke="#8e8e8e" stroke-width="2.0"/><path d="M450,463 L490,479" stroke="#2f353f" stroke-width="4.6"/><path d="M450,463 L490,479" stroke="#8e8e8e" stroke-width="2.0"/><path d="M450,476 L490,492" stroke="#2f353f" stroke-width="4.6"/><path d="M450,476 L490,492" stroke="#8e8e8e" stroke-width="2.0"/><path d="M450,489 L490,505" stroke="#2f353f" stroke-width="4.6"/><path d="M450,489 L490,505" stroke="#8e8e8e" stroke-width="2.0"/><path d="M450,502 L490,518" stroke="#2f353f" stroke-width="4.6"/><path d="M450,502 L490,518" stroke="#8e8e8e" stroke-width="2.0"/><path d="M450,515 L490,531" stroke="#2f353f" stroke-width="4.6"/><path d="M450,515 L490,531" stroke="#8e8e8e" stroke-width="2.0"/><path d="M450,528 L490,544" stroke="#2f353f" stroke-width="4.6"/><path d="M450,528 L490,544" stroke="#8e8e8e" stroke-width="2.0"/><path d="M450,466 L490,450" stroke="#2f353f" stroke-width="4.6"/><path d="M450,466 L490,450" stroke="#7a7a7a" stroke-width="2.0"/><path d="M450,479 L490,463" stroke="#2f353f" stroke-width="4.6"/><path d="M450,479 L490,463" stroke="#7a7a7a" stroke-width="2.0"/><path d="M450,492 L490,476" stroke="#2f353f" stroke-width="4.6"/><path d="M450,492 L490,476" stroke="#7a7a7a" stroke-width="2.0"/><path d="M450,505 L490,489" stroke="#2f353f" stroke-width="4.6"/><path d="M450,505 L490,489" stroke="#7a7a7a" stroke-width="2.0"/><path d="M450,518 L490,502" stroke="#2f353f" stroke-width="4.6"/><path d="M450,518 L490,502" stroke="#7a7a7a" stroke-width="2.0"/><path d="M450,531 L490,515" stroke="#2f353f" stroke-width="4.6"/><path d="M450,531 L490,515" stroke="#7a7a7a" stroke-width="2.0"/><path d="M450,544 L490,528" stroke="#2f353f" stroke-width="4.6"/><path d="M450,544 L490,528" stroke="#7a7a7a" stroke-width="2.0"/></g><circle cx="465" cy="564.6" r="13.5" stroke="#3a3f48" stroke-width="7.6" fill="none"/><circle cx="465" cy="564.6" r="13.5" stroke="#a6a6a6" stroke-width="5.4" fill="none"/><path d="M493.8,598.6 C505,608 520,614 537,615.5" stroke="#3a3f48" stroke-width="7.3" fill="none" stroke-linecap="round"/><path d="M493.8,598.6 C505,608 520,614 537,615.5" stroke="#a4a4a4" stroke-width="5.5" fill="none" stroke-linecap="round"/><path d="M538,668 C552,690 560,712 561,735" stroke="#3a3f48" stroke-width="7.3" fill="none" stroke-linecap="round"/><path d="M538,668 C552,690 560,712 561,735" stroke="#a4a4a4" stroke-width="5.5" fill="none" stroke-linecap="round"/><path d="M543,687 C543,730 537,770 534,795" stroke="#3a3f48" stroke-width="7.3" fill="none" stroke-linecap="round"/><path d="M543,687 C543,730 537,770 534,795" stroke="#a4a4a4" stroke-width="5.5" fill="none" stroke-linecap="round"/><path d="M538,700 C525,760 492,808 466,836" stroke="#3a3f48" stroke-width="7.3" fill="none" stroke-linecap="round"/><path d="M538,700 C525,760 492,808 466,836" stroke="#a4a4a4" stroke-width="5.5" fill="none" stroke-linecap="round"/><path d="M535,712 C520,748 502,768 482,781" stroke="#3a3f48" stroke-width="7.3" fill="none" stroke-linecap="round"/><path d="M535,712 C520,748 502,768 482,781" stroke="#a4a4a4" stroke-width="5.5" fill="none" stroke-linecap="round"/><path d="M449,645 L457,632" stroke="#3a3f48" stroke-width="5.8" fill="none" stroke-linecap="round"/><path d="M449,645 L457,632" stroke="#a4a4a4" stroke-width="4" fill="none" stroke-linecap="round"/><path d="M378,685 L389,686" stroke="#3a3f48" stroke-width="5.3" fill="none" stroke-linecap="round"/><path d="M378,685 L389,686" stroke="#a4a4a4" stroke-width="3.5" fill="none" stroke-linecap="round"/><path d="M480,765 L488,775" stroke="#3a3f48" stroke-width="5.3" fill="none" stroke-linecap="round"/><path d="M480,765 L488,775" stroke="#a4a4a4" stroke-width="3.5" fill="none" stroke-linecap="round"/><path d="M537,744 L548,749" stroke="#3a3f48" stroke-width="5.3" fill="none" stroke-linecap="round"/><path d="M537,744 L548,749" stroke="#a4a4a4" stroke-width="3.5" fill="none" stroke-linecap="round"/><path d="M496,613 C492,633 478,648 458,655" stroke="#3a3f48" stroke-width="7.3" fill="none" stroke-linecap="round"/><path d="M496,613 C492,633 478,648 458,655" stroke="#a4a4a4" stroke-width="5.5" fill="none" stroke-linecap="round"/><path d="M446,592 C420,596 390,618 376,655 C362,700 368,745 393,770 C413,789 440,790 456,788" stroke="#2f353f" stroke-width="11.8" fill="none" stroke-linecap="round"/><path d="M446,592 C420,596 390,618 376,655 C362,700 368,745 393,770 C413,789 440,790 456,788" stroke="#4e5157" stroke-width="10.0" fill="none" stroke-linecap="round"/><path d="M446,592 C420,596 390,618 376,655 C362,700 368,745 393,770 C413,789 440,790 456,788" stroke="#84807a" stroke-width="7.00" fill="none" stroke-linecap="round" stroke-dasharray="0 8.20"/><path d="M446,592 C420,596 390,618 376,655 C362,700 368,745 393,770 C413,789 440,790 456,788" stroke="#45474d" stroke-width="4.80" fill="none" stroke-linecap="round" stroke-dasharray="0 8.20"/><path d="M446,592 C420,596 390,618 376,655 C362,700 368,745 393,770 C413,789 440,790 456,788" stroke="#e0e0e0" stroke-width="1.3" fill="none" stroke-linecap="round" stroke-dasharray="0 8.20"/><path d="M494,606 C470,602 432,610 410,633 C390,657 385,700 402,720 C418,737 452,736 471,721 C482,712 490,702 498,690" stroke="#2f353f" stroke-width="11.8" fill="none" stroke-linecap="round"/><path d="M494,606 C470,602 432,610 410,633 C390,657 385,700 402,720 C418,737 452,736 471,721 C482,712 490,702 498,690" stroke="#4e5157" stroke-width="10.0" fill="none" stroke-linecap="round"/><path d="M494,606 C470,602 432,610 410,633 C390,657 385,700 402,720 C418,737 452,736 471,721 C482,712 490,702 498,690" stroke="#84807a" stroke-width="7.00" fill="none" stroke-linecap="round" stroke-dasharray="0 8.20"/><path d="M494,606 C470,602 432,610 410,633 C390,657 385,700 402,720 C418,737 452,736 471,721 C482,712 490,702 498,690" stroke="#45474d" stroke-width="4.80" fill="none" stroke-linecap="round" stroke-dasharray="0 8.20"/><path d="M494,606 C470,602 432,610 410,633 C390,657 385,700 402,720 C418,737 452,736 471,721 C482,712 490,702 498,690" stroke="#e0e0e0" stroke-width="1.3" fill="none" stroke-linecap="round" stroke-dasharray="0 8.20"/><path d="M442.0,606 A23.5,24 0 1 1 489.0,606 A23.5,24 0 1 1 442.0,606 Z" stroke="#2f353f" stroke-width="10.8" fill="none" stroke-linecap="round"/><path d="M442.0,606 A23.5,24 0 1 1 489.0,606 A23.5,24 0 1 1 442.0,606 Z" stroke="#4e5157" stroke-width="9.0" fill="none" stroke-linecap="round"/><path d="M442.0,606 A23.5,24 0 1 1 489.0,606 A23.5,24 0 1 1 442.0,606 Z" stroke="#84807a" stroke-width="6.30" fill="none" stroke-linecap="round" stroke-dasharray="0 7.38"/><path d="M442.0,606 A23.5,24 0 1 1 489.0,606 A23.5,24 0 1 1 442.0,606 Z" stroke="#45474d" stroke-width="4.32" fill="none" stroke-linecap="round" stroke-dasharray="0 7.38"/><path d="M442.0,606 A23.5,24 0 1 1 489.0,606 A23.5,24 0 1 1 442.0,606 Z" stroke="#e0e0e0" stroke-width="1.3" fill="none" stroke-linecap="round" stroke-dasharray="0 7.38"/><path d="M497.6,605.7 L496.8,608.9 L496.0,612.0 L495.1,615.0 L494.2,617.8 L493.3,620.4 L492.4,623.0 L491.4,625.4 L490.4,627.7 L489.5,629.9 L488.5,632.0 L487.5,634.0 L486.6,635.9 L485.6,637.7 L484.6,639.5 L483.7,641.2 L482.8,642.8 L481.8,644.4 L480.9,646.0 L479.9,647.6 L479.0,649.2 L478.0,650.8 L477.0,652.4 L476.0,654.0 L474.9,655.6 L472.6,660.4 L471.5,665.7 L471.9,671.0 L473.6,676.1 L476.6,680.5 L480.6,684.1 L485.4,686.4 L490.7,687.5 L496.0,687.1 L501.1,685.4 L505.5,682.4 L509.1,678.4 L510.9,675.5 L512.6,672.5 L514.1,669.5 L515.5,666.4 L516.6,663.2 L517.6,660.0 L518.4,656.7 L519.0,653.4 L519.4,650.1 L519.6,646.8 L519.6,643.4 L519.4,640.1 L519.0,636.8 L518.5,633.6 L517.7,630.3 L516.7,627.2 L515.5,624.1 L514.1,621.0 L512.6,618.0 L510.9,615.1 L509.0,612.3 L507.0,609.5 L504.8,606.9 L502.4,604.3 Z" fill="url(#lf)" stroke="#3f444c" stroke-width="1.2"/><path d="M516.3,636.4 L519.8,639.0 L523.1,641.5 L526.1,644.1 L529.0,646.8 L531.6,649.4 L534.1,652.0 L536.4,654.6 L538.5,657.2 L540.5,659.8 L542.4,662.4 L544.1,665.1 L545.7,667.7 L547.2,670.3 L548.7,673.0 L550.1,675.8 L551.4,678.5 L552.6,681.4 L553.8,684.3 L555.0,687.3 L556.1,690.4 L557.1,693.7 L558.1,697.0 L559.1,700.5 L560.0,704.2 L561.7,708.7 L564.5,712.6 L568.2,715.7 L572.6,717.7 L577.4,718.5 L582.2,718.0 L586.7,716.3 L590.6,713.5 L593.7,709.8 L595.7,705.4 L596.5,700.6 L596.0,695.8 L594.8,690.9 L593.4,686.2 L591.7,681.5 L589.9,677.0 L587.8,672.6 L585.6,668.4 L583.1,664.4 L580.4,660.6 L577.5,656.9 L574.5,653.5 L571.2,650.3 L567.8,647.3 L564.2,644.6 L560.4,642.1 L556.6,639.9 L552.6,637.9 L548.5,636.2 L544.3,634.8 L540.0,633.6 L535.6,632.7 L531.2,632.0 L526.8,631.6 L522.2,631.5 L517.7,631.6 Z" fill="url(#lf)" stroke="#3f444c" stroke-width="1.2"/><path d="M520.6,636.7 L520.3,641.9 L519.8,646.8 L519.1,651.6 L518.3,656.1 L517.2,660.4 L516.1,664.6 L514.8,668.6 L513.3,672.5 L511.8,676.2 L510.1,679.8 L508.3,683.3 L506.4,686.7 L504.3,690.1 L502.2,693.4 L499.9,696.7 L497.5,700.1 L494.9,703.4 L492.1,706.7 L489.2,710.1 L486.1,713.5 L482.8,717.0 L479.2,720.5 L475.5,724.0 L471.5,727.6 L468.0,731.6 L465.6,736.4 L464.5,741.6 L464.9,747.0 L466.6,752.0 L469.6,756.5 L473.6,760.0 L478.4,762.4 L483.6,763.5 L489.0,763.1 L494.0,761.4 L498.5,758.4 L503.4,754.0 L508.1,749.4 L512.5,744.7 L516.6,739.9 L520.4,734.9 L523.9,729.9 L527.0,724.7 L529.9,719.5 L532.4,714.2 L534.5,708.8 L536.2,703.3 L537.6,697.8 L538.6,692.3 L539.3,686.7 L539.5,681.2 L539.4,675.8 L538.8,670.3 L537.9,665.0 L536.7,659.8 L535.1,654.6 L533.1,649.6 L530.9,644.7 L528.3,639.9 L525.4,635.3 Z" fill="url(#lf)" stroke="#3f444c" stroke-width="1.2"/><circle cx="470.3" cy="579.3" r="3" fill="#35c035" stroke="#1d6a1d" stroke-width="0.8"/><circle cx="553.6" cy="612.9" r="18.4" fill="url(#pv)" stroke="#2f353f" stroke-width="1.6"/><circle cx="444" cy="658.6" r="18.4" fill="url(#pv)" stroke="#2f353f" stroke-width="1.6"/><circle cx="564" cy="752" r="18.4" fill="url(#pv)" stroke="#2f353f" stroke-width="1.6"/><circle cx="464.8" cy="787" r="18.4" fill="url(#pv)" stroke="#2f353f" stroke-width="1.6"/><circle cx="534" cy="811.7" r="18.4" fill="url(#pv)" stroke="#2f353f" stroke-width="1.6"/><circle cx="457.5" cy="853.9" r="18.4" fill="url(#pv)" stroke="#2f353f" stroke-width="1.6"/></svg>
<svg class="a" style="left:0px;top:0px;" width="1528" height="1038" viewBox="0 0 1528 1038"><path d="M1423,881 L1424,830 L1425,800" stroke="#7acc7a" stroke-width="1" fill="none"/><path d="M1423,881 L1446,880.5 L1485,881 L1503,881.5" stroke="#9a3048" stroke-width="1" fill="none"/><path d="M1424,794 L1428,799 L1433,793 M1428,799 V805" stroke="#6ad06a" stroke-width="1" fill="none"/><path d="M1510,884 L1518,893 M1518,884 L1510,893" stroke="#5a2a40" stroke-width="1.1" fill="none"/><path d="M1420,882 H1426 L1420,887.5 H1427" stroke="#2a4070" stroke-width="1" fill="none"/></svg>
<div class="a" style="left:0px;top:986px;width:1528px;height:34px;background:linear-gradient(#e8f2fc 0%,#ddebfa 55%,#cfe3f7 100%)"></div>
<div class="a" style="left:0px;top:986px;width:1528px;height:1px;background:#505050"></div>
<svg class="a" style="left:0px;top:986px;" width="1528" height="16" viewBox="0 0 1528 16"><rect x="0.0" y="0" width="1" height="13" fill="#3a3a3a"/><rect x="8.0" y="0" width="1" height="4" fill="#3a3a3a"/><rect x="15.9" y="0" width="1" height="4" fill="#3a3a3a"/><rect x="23.9" y="0" width="1" height="4" fill="#3a3a3a"/><rect x="31.8" y="0" width="1" height="4" fill="#3a3a3a"/><rect x="39.8" y="0" width="1" height="8" fill="#3a3a3a"/><rect x="47.7" y="0" width="1" height="4" fill="#3a3a3a"/><rect x="55.7" y="0" width="1" height="4" fill="#3a3a3a"/><rect x="63.6" y="0" width="1" height="4" fill="#3a3a3a"/><rect x="71.6" y="0" width="1" height="4" fill="#3a3a3a"/><rect x="79.5" y="0" width="1" height="13" fill="#3a3a3a"/><rect x="87.5" y="0" width="1" height="4" fill="#3a3a3a"/><rect x="95.5" y="0" width="1" height="4" fill="#3a3a3a"/><rect x="103.4" y="0" width="1" height="4" fill="#3a3a3a"/><rect x="111.4" y="0" width="1" height="4" fill="#3a3a3a"/><rect x="119.3" y="0" width="1" height="8" fill="#3a3a3a"/><rect x="127.3" y="0" width="1" height="4" fill="#3a3a3a"/><rect x="135.2" y="0" width="1" height="4" fill="#3a3a3a"/><rect x="143.2" y="0" width="1" height="4" fill="#3a3a3a"/><rect x="151.1" y="0" width="1" height="4" fill="#3a3a3a"/><rect x="159.1" y="0" width="1" height="13" fill="#3a3a3a"/><rect x="167.1" y="0" width="1" height="4" fill="#3a3a3a"/><rect x="175.0" y="0" width="1" height="4" fill="#3a3a3a"/><rect x="183.0" y="0" width="1" height="4" fill="#3a3a3a"/><rect x="190.9" y="0" width="1" height="4" fill="#3a3a3a"/><rect x="198.9" y="0" width="1" height="8" fill="#3a3a3a"/><rect x="206.8" y="0" width="1" height="4" fill="#3a3a3a"/><rect x="214.8" y="0" width="1" height="4" fill="#3a3a3a"/><rect x="222.7" y="0" width="1" height="4" fill="#3a3a3a"/><rect x="230.7" y="0" width="1" height="4" fill="#3a3a3a"/><rect x="238.7" y="0" width="1" height="13" fill="#3a3a3a"/><rect x="246.6" y="0" width="1" height="4" fill="#3a3a3a"/><rect x="254.6" y="0" width="1" height="4" fill="#3a3a3a"/><rect x="262.5" y="0" width="1" height="4" fill="#3a3a3a"/><rect x="270.5" y="0" width="1" height="4" fill="#3a3a3a"/><rect x="278.4" y="0" width="1" height="8" fill="#3a3a3a"/><rect x="286.4" y="0" width="1" height="4" fill="#3a3a3a"/><rect x="294.3" y="0" width="1" height="4" fill="#3a3a3a"/><rect x="302.3" y="0" width="1" height="4" fill="#3a3a3a"/><rect x="310.2" y="0" width="1" height="4" fill="#3a3a3a"/><rect x="318.2" y="0" width="1" height="13" fill="#3a3a3a"/><rect x="326.2" y="0" width="1" height="4" fill="#3a3a3a"/><rect x="334.1" y="0" width="1" height="4" fill="#3a3a3a"/><rect x="342.1" y="0" width="1" height="4" fill="#3a3a3a"/><rect x="350.0" y="0" width="1" height="4" fill="#3a3a3a"/><rect x="358.0" y="0" width="1" height="8" fill="#3a3a3a"/><rect x="365.9" y="0" width="1" height="4" fill="#3a3a3a"/><rect x="373.9" y="0" width="1" height="4" fill="#3a3a3a"/><rect x="381.8" y="0" width="1" height="4" fill="#3a3a3a"/><rect x="389.8" y="0" width="1" height="4" fill="#3a3a3a"/><rect x="397.8" y="0" width="1" height="13" fill="#3a3a3a"/><rect x="405.7" y="0" width="1" height="4" fill="#3a3a3a"/><rect x="413.7" y="0" width="1" height="4" fill="#3a3a3a"/><rect x="421.6" y="0" width="1" height="4" fill="#3a3a3a"/><rect x="429.6" y="0" width="1" height="4" fill="#3a3a3a"/><rect x="437.5" y="0" width="1" height="8" fill="#3a3a3a"/><rect x="445.5" y="0" width="1" height="4" fill="#3a3a3a"/><rect x="453.4" y="0" width="1" height="4" fill="#3a3a3a"/><rect x="461.4" y="0" width="1" height="4" fill="#3a3a3a"/><rect x="469.3" y="0" width="1" height="4" fill="#3a3a3a"/><rect x="477.3" y="0" width="1" height="13" fill="#3a3a3a"/><rect x="485.3" y="0" width="1" height="4" fill="#3a3a3a"/><rect x="493.2" y="0" width="1" height="4" fill="#3a3a3a"/><rect x="501.2" y="0" width="1" height="4" fill="#3a3a3a"/><rect x="509.1" y="0" width="1" height="4" fill="#3a3a3a"/><rect x="517.1" y="0" width="1" height="8" fill="#3a3a3a"/><rect x="525.0" y="0" width="1" height="4" fill="#3a3a3a"/><rect x="533.0" y="0" width="1" height="4" fill="#3a3a3a"/><rect x="540.9" y="0" width="1" height="4" fill="#3a3a3a"/><rect x="548.9" y="0" width="1" height="4" fill="#3a3a3a"/><rect x="556.9" y="0" width="1" height="13" fill="#3a3a3a"/><rect x="564.8" y="0" width="1" height="4" fill="#3a3a3a"/><rect x="572.8" y="0" width="1" height="4" fill="#3a3a3a"/><rect x="580.7" y="0" width="1" height="4" fill="#3a3a3a"/><rect x="588.7" y="0" width="1" height="4" fill="#3a3a3a"/><rect x="596.6" y="0" width="1" height="8" fill="#3a3a3a"/><rect x="604.6" y="0" width="1" height="4" fill="#3a3a3a"/><rect x="612.5" y="0" width="1" height="4" fill="#3a3a3a"/><rect x="620.5" y="0" width="1" height="4" fill="#3a3a3a"/><rect x="628.4" y="0" width="1" height="4" fill="#3a3a3a"/><rect x="636.4" y="0" width="1" height="13" fill="#3a3a3a"/><rect x="644.4" y="0" width="1" height="4" fill="#3a3a3a"/><rect x="652.3" y="0" width="1" height="4" fill="#3a3a3a"/><rect x="660.3" y="0" width="1" height="4" fill="#3a3a3a"/><rect x="668.2" y="0" width="1" height="4" fill="#3a3a3a"/><rect x="676.2" y="0" width="1" height="8" fill="#3a3a3a"/><rect x="684.1" y="0" width="1" height="4" fill="#3a3a3a"/><rect x="692.1" y="0" width="1" height="4" fill="#3a3a3a"/><rect x="700.0" y="0" width="1" height="4" fill="#3a3a3a"/><rect x="708.0" y="0" width="1" height="4" fill="#3a3a3a"/><rect x="716.0" y="0" width="1" height="13" fill="#3a3a3a"/><rect x="723.9" y="0" width="1" height="4" fill="#3a3a3a"/><rect x="731.9" y="0" width="1" height="4" fill="#3a3a3a"/><rect x="739.8" y="0" width="1" height="4" fill="#3a3a3a"/><rect x="747.8" y="0" width="1" height="4" fill="#3a3a3a"/><rect x="755.7" y="0" width="1" height="8" fill="#3a3a3a"/><rect x="763.7" y="0" width="1" height="4" fill="#3a3a3a"/><rect x="771.6" y="0" width="1" height="4" fill="#3a3a3a"/><rect x="779.6" y="0" width="1" height="4" fill="#3a3a3a"/><rect x="787.5" y="0" width="1" height="4" fill="#3a3a3a"/><rect x="795.5" y="0" width="1" height="13" fill="#3a3a3a"/><rect x="803.5" y="0" width="1" height="4" fill="#3a3a3a"/><rect x="811.4" y="0" width="1" height="4" fill="#3a3a3a"/><rect x="819.4" y="0" width="1" height="4" fill="#3a3a3a"/><rect x="827.3" y="0" width="1" height="4" fill="#3a3a3a"/><rect x="835.3" y="0" width="1" height="8" fill="#3a3a3a"/><rect x="843.2" y="0" width="1" height="4" fill="#3a3a3a"/><rect x="851.2" y="0" width="1" height="4" fill="#3a3a3a"/><rect x="859.1" y="0" width="1" height="4" fill="#3a3a3a"/><rect x="867.1" y="0" width="1" height="4" fill="#3a3a3a"/><rect x="875.0" y="0" width="1" height="13" fill="#3a3a3a"/><rect x="883.0" y="0" width="1" height="4" fill="#3a3a3a"/><rect x="891.0" y="0" width="1" height="4" fill="#3a3a3a"/><rect x="898.9" y="0" width="1" height="4" fill="#3a3a3a"/><rect x="906.9" y="0" width="1" height="4" fill="#3a3a3a"/><rect x="914.8" y="0" width="1" height="8" fill="#3a3a3a"/><rect x="922.8" y="0" width="1" height="4" fill="#3a3a3a"/><rect x="930.7" y="0" width="1" height="4" fill="#3a3a3a"/><rect x="938.7" y="0" width="1" height="4" fill="#3a3a3a"/><rect x="946.6" y="0" width="1" height="4" fill="#3a3a3a"/><rect x="954.6" y="0" width="1" height="13" fill="#3a3a3a"/><rect x="962.6" y="0" width="1" height="4" fill="#3a3a3a"/><rect x="970.5" y="0" width="1" height="4" fill="#3a3a3a"/><rect x="978.5" y="0" width="1" height="4" fill="#3a3a3a"/><rect x="986.4" y="0" width="1" height="4" fill="#3a3a3a"/><rect x="994.4" y="0" width="1" height="8" fill="#3a3a3a"/><rect x="1002.3" y="0" width="1" height="4" fill="#3a3a3a"/><rect x="1010.3" y="0" width="1" height="4" fill="#3a3a3a"/><rect x="1018.2" y="0" width="1" height="4" fill="#3a3a3a"/><rect x="1026.2" y="0" width="1" height="4" fill="#3a3a3a"/><rect x="1034.2" y="0" width="1" height="13" fill="#3a3a3a"/><rect x="1042.1" y="0" width="1" height="4" fill="#3a3a3a"/><rect x="1050.1" y="0" width="1" height="4" fill="#3a3a3a"/><rect x="1058.0" y="0" width="1" height="4" fill="#3a3a3a"/><rect x="1066.0" y="0" width="1" height="4" fill="#3a3a3a"/><rect x="1073.9" y="0" width="1" height="8" fill="#3a3a3a"/><rect x="1081.9" y="0" width="1" height="4" fill="#3a3a3a"/><rect x="1089.8" y="0" width="1" height="4" fill="#3a3a3a"/><rect x="1097.8" y="0" width="1" height="4" fill="#3a3a3a"/><rect x="1105.7" y="0" width="1" height="4" fill="#3a3a3a"/><rect x="1113.7" y="0" width="1" height="13" fill="#3a3a3a"/><rect x="1121.7" y="0" width="1" height="4" fill="#3a3a3a"/><rect x="1129.6" y="0" width="1" height="4" fill="#3a3a3a"/><rect x="1137.6" y="0" width="1" height="4" fill="#3a3a3a"/><rect x="1145.5" y="0" width="1" height="4" fill="#3a3a3a"/><rect x="1153.5" y="0" width="1" height="8" fill="#3a3a3a"/><rect x="1161.4" y="0" width="1" height="4" fill="#3a3a3a"/><rect x="1169.4" y="0" width="1" height="4" fill="#3a3a3a"/><rect x="1177.3" y="0" width="1" height="4" fill="#3a3a3a"/><rect x="1185.3" y="0" width="1" height="4" fill="#3a3a3a"/><rect x="1193.2" y="0" width="1" height="13" fill="#3a3a3a"/><rect x="1201.2" y="0" width="1" height="4" fill="#3a3a3a"/><rect x="1209.2" y="0" width="1" height="4" fill="#3a3a3a"/><rect x="1217.1" y="0" width="1" height="4" fill="#3a3a3a"/><rect x="1225.1" y="0" width="1" height="4" fill="#3a3a3a"/><rect x="1233.0" y="0" width="1" height="8" fill="#3a3a3a"/><rect x="1241.0" y="0" width="1" height="4" fill="#3a3a3a"/><rect x="1248.9" y="0" width="1" height="4" fill="#3a3a3a"/><rect x="1256.9" y="0" width="1" height="4" fill="#3a3a3a"/><rect x="1264.8" y="0" width="1" height="4" fill="#3a3a3a"/><rect x="1272.8" y="0" width="1" height="13" fill="#3a3a3a"/><rect x="1280.8" y="0" width="1" height="4" fill="#3a3a3a"/><rect x="1288.7" y="0" width="1" height="4" fill="#3a3a3a"/><rect x="1296.7" y="0" width="1" height="4" fill="#3a3a3a"/><rect x="1304.6" y="0" width="1" height="4" fill="#3a3a3a"/><rect x="1312.6" y="0" width="1" height="8" fill="#3a3a3a"/><rect x="1320.5" y="0" width="1" height="4" fill="#3a3a3a"/><rect x="1328.5" y="0" width="1" height="4" fill="#3a3a3a"/><rect x="1336.4" y="0" width="1" height="4" fill="#3a3a3a"/><rect x="1344.4" y="0" width="1" height="4" fill="#3a3a3a"/><rect x="1352.3" y="0" width="1" height="13" fill="#3a3a3a"/><rect x="1360.3" y="0" width="1" height="4" fill="#3a3a3a"/><rect x="1368.3" y="0" width="1" height="4" fill="#3a3a3a"/><rect x="1376.2" y="0" width="1" height="4" fill="#3a3a3a"/><rect x="1384.2" y="0" width="1" height="4" fill="#3a3a3a"/><rect x="1392.1" y="0" width="1" height="8" fill="#3a3a3a"/><rect x="1400.1" y="0" width="1" height="4" fill="#3a3a3a"/><rect x="1408.0" y="0" width="1" height="4" fill="#3a3a3a"/><rect x="1416.0" y="0" width="1" height="4" fill="#3a3a3a"/><rect x="1423.9" y="0" width="1" height="4" fill="#3a3a3a"/><rect x="1431.9" y="0" width="1" height="13" fill="#3a3a3a"/><rect x="1439.9" y="0" width="1" height="4" fill="#3a3a3a"/><rect x="1447.8" y="0" width="1" height="4" fill="#3a3a3a"/><rect x="1455.8" y="0" width="1" height="4" fill="#3a3a3a"/><rect x="1463.7" y="0" width="1" height="4" fill="#3a3a3a"/><rect x="1471.7" y="0" width="1" height="8" fill="#3a3a3a"/><rect x="1479.6" y="0" width="1" height="4" fill="#3a3a3a"/></svg>
<div class="t" style="top:1005.35px;font-size:13px;line-height:13px;color:#111;left:2px;">0</div>
<div class="t" style="top:1005.35px;font-size:13px;line-height:13px;color:#111;left:75.93px;">1</div>
<div class="t" style="top:1005.35px;font-size:13px;line-height:13px;color:#111;left:155.48px;">2</div>
<div class="t" style="top:1005.35px;font-size:13px;line-height:13px;color:#111;left:235.03px;">3</div>
<div class="t" style="top:1005.35px;font-size:13px;line-height:13px;color:#111;left:314.58px;">4</div>
<div class="t" style="top:1005.35px;font-size:13px;line-height:13px;color:#111;left:394.13px;">5</div>
<div class="t" style="top:1005.35px;font-size:13px;line-height:13px;color:#111;left:473.68px;">6</div>
<div class="t" style="top:1005.35px;font-size:13px;line-height:13px;color:#111;left:553.23px;">7</div>
<div class="t" style="top:1005.35px;font-size:13px;line-height:13px;color:#111;left:632.78px;">8</div>
<div class="t" style="top:1005.35px;font-size:13px;line-height:13px;color:#111;left:712.33px;">9</div>
<div class="t" style="top:1005.35px;font-size:13px;line-height:13px;color:#111;left:788.27px;">10</div>
<div class="t" style="top:1005.35px;font-size:13px;line-height:13px;color:#111;left:868.30px;">11</div>
<div class="t" style="top:1005.35px;font-size:13px;line-height:13px;color:#111;left:947.37px;">12</div>
<div class="t" style="top:1005.35px;font-size:13px;line-height:13px;color:#111;left:1026.92px;">13</div>
<div class="t" style="top:1005.35px;font-size:13px;line-height:13px;color:#111;left:1106.47px;">14</div>
<div class="t" style="top:1005.35px;font-size:13px;line-height:13px;color:#111;left:1186.02px;">15</div>
<div class="t" style="top:1005.35px;font-size:13px;line-height:13px;color:#111;left:1265.57px;">16</div>
<div class="t" style="top:1005.35px;font-size:13px;line-height:13px;color:#111;left:1345.12px;">17</div>
<div class="t" style="top:1005.35px;font-size:13px;line-height:13px;color:#111;left:1424.67px;">18</div>
<div class="t" style="top:998.35px;font-size:13px;line-height:13px;color:#111;left:1500.33px;">cm</div>
<div class="a" style="left:0px;top:1019px;width:1528px;height:3px;background:#a8e2fa"></div>
<div class="a" style="left:0px;top:1022px;width:1528px;height:16px;background:#2699fc"></div>
<div class="t" style="top:1027.62px;font-size:11.5px;line-height:11.5px;color:#c9f1ff;left:7px;transform:scaleX(0.9023);transform-origin:0 0;">Ready</div>
<div class="a" style="left:726px;top:288px;width:616px;height:541px;background:#f0f0f0;border:1px solid #8797aa;box-shadow:0 1px 5px rgba(50,70,100,0.35)"></div>
<div class="a" style="left:727px;top:289px;width:614px;height:29px;background:#fff"></div>
<div class="t" style="top:299.62px;font-size:11.5px;line-height:11.5px;color:#9b9b9b;left:756.5px;transform:scaleX(1.0089);transform-origin:0 0;">Fix Wizard (Part: stl&nbsp; new) &gt; Diagnostics</div>
<svg class="a" style="left:0px;top:0px;" width="1528" height="1038" viewBox="0 0 1528 1038"><path d="M741,296 H746 V301 H751 V306 H746 V311 H741 V306 H736 V301 H741 Z" fill="#e01818" stroke="#a01010" stroke-width="0.8" stroke-linejoin="round"/><path d="M742,297 H745 V302 H750" stroke="#ff5050" stroke-width="1" fill="none"/><rect x="1222" y="303" width="10" height="1" fill="#5a5a5a"/><rect x="1265.5" y="297.5" width="12" height="11" fill="none" stroke="#ededed" stroke-width="1"/><path d="M1313,298 L1326,311 M1326,298 L1313,311" stroke="#707070" stroke-width="1"/></svg>
<div class="a" style="left:731px;top:323px;width:121px;height:504px;background:#fff;border:1px solid #a0a0a0"></div>
<div class="a" style="left:733px;top:325px;width:117px;height:500px;border:1px solid #646464;border-right-color:#e3e3e3;border-bottom-color:#e3e3e3"></div>
<div class="a" style="left:736px;top:327px;width:110px;height:20px;background:#ececec"></div>
<div class="t" style="top:332.62px;font-size:11.5px;line-height:11.5px;color:#000;left:760.5px;transform:scaleX(1.0092);transform-origin:0 0;">Diagnostics</div>
<div class="t" style="top:353.62px;font-size:11.5px;line-height:11.5px;color:#000;left:760.5px;transform:scaleX(1.0288);transform-origin:0 0;">Combined Fix</div>
<div class="a" style="left:736px;top:378px;width:110px;height:1px;background:#8c8c8c"></div>
<div class="t" style="top:395.62px;font-size:11.5px;line-height:11.5px;color:#000;left:760.5px;transform:scaleX(1.0000);transform-origin:0 0;">Normals</div>
<div class="t" style="top:416.62px;font-size:11.5px;line-height:11.5px;color:#000;left:760.5px;transform:scaleX(1.0000);transform-origin:0 0;">Stitching</div>
<div class="t" style="top:437.62px;font-size:11.5px;line-height:11.5px;color:#000;left:760.5px;transform:scaleX(1.0000);transform-origin:0 0;">Noise Shells</div>
<div class="t" style="top:458.62px;font-size:11.5px;line-height:11.5px;color:#000;left:760.5px;transform:scaleX(1.0000);transform-origin:0 0;">Holes</div>
<div class="t" style="top:479.62px;font-size:11.5px;line-height:11.5px;color:#000;left:760.5px;transform:scaleX(1.0000);transform-origin:0 0;">Triangles</div>
<div class="t" style="top:500.62px;font-size:11.5px;line-height:11.5px;color:#000;left:760.5px;transform:scaleX(1.0000);transform-origin:0 0;">Overlaps</div>
<div class="t" style="top:521.62px;font-size:11.5px;line-height:11.5px;color:#000;left:760.5px;transform:scaleX(1.0000);transform-origin:0 0;">Shells</div>
<div class="a" style="left:736px;top:545px;width:110px;height:1px;background:#8c8c8c"></div>
<div class="t" style="top:563.62px;font-size:11.5px;line-height:11.5px;color:#000;left:760.5px;transform:scaleX(1.0000);transform-origin:0 0;">Profiles</div>
<svg class="a" style="left:0px;top:0px;" width="1528" height="1038" viewBox="0 0 1528 1038"><path d="M740,346 L748,337" stroke="#5a5a5a" stroke-width="3.6" stroke-linecap="round"/><path d="M740.5,345.5 L747.5,337.5" stroke="#c0c8b0" stroke-width="1.6" stroke-linecap="round"/><circle cx="751" cy="333.5" r="5.3" fill="#8fc0ee" stroke="#3a6aa8" stroke-width="1.4"/><circle cx="750" cy="332.5" r="2.4" fill="#c6e2fa"/><path d="M742,351 L751,349 L756,352 L756,364 L747,366 L742,363 Z" fill="#d6e4f6" stroke="#7a8ab0" stroke-width="1"/><path d="M745,352 L745,364 M748,351 L748,365" stroke="#8a9ac0" stroke-width="0.8"/><polygon points="738.0,392.8 748.4,389.0 756.0,393.2 745.6,396.6" fill="#dfe4f7"/><polygon points="738.0,392.8 745.6,396.6 745.6,408.0 738.0,403.8" fill="#c8d0f0"/><polygon points="745.6,396.6 756.0,393.2 756.0,404.2 745.6,408.0" fill="#c42222"/><polygon points="738.0,392.8 748.4,389.0 756.0,393.2 756.0,404.2 745.6,408.0 738.0,403.8" fill="none" stroke="#5a64a0" stroke-width="1.1" stroke-linejoin="round"/><polyline points="738.0,392.8 745.6,396.6 756.0,393.2" fill="none" stroke="#5a64a0" stroke-width="1.1" stroke-linejoin="round"/><line x1="745.6" y1="396.6" x2="745.6" y2="408.0" stroke="#5a64a0" stroke-width="1.1"/><polygon points="738.0,413.8 748.4,410.0 756.0,414.2 745.6,417.6" fill="#dfe4f7"/><polygon points="738.0,413.8 745.6,417.6 745.6,429.0 738.0,424.8" fill="#c8d0f0"/><polygon points="745.6,417.6 756.0,414.2 756.0,425.2 745.6,429.0" fill="#9aa8e0"/><polygon points="738.0,413.8 748.4,410.0 756.0,414.2 756.0,425.2 745.6,429.0 738.0,424.8" fill="none" stroke="#5a64a0" stroke-width="1.1" stroke-linejoin="round"/><polyline points="738.0,413.8 745.6,417.6 756.0,414.2" fill="none" stroke="#5a64a0" stroke-width="1.1" stroke-linejoin="round"/><line x1="745.6" y1="417.6" x2="745.6" y2="429.0" stroke="#5a64a0" stroke-width="1.1"/><path d="M745,415 L749,418 L754,412" stroke="#b0a020" stroke-width="1.6" fill="none"/><polygon points="738.0,434.8 748.4,431.0 756.0,435.2 745.6,438.6" fill="#c8d0f0"/><polygon points="738.0,434.8 745.6,438.6 745.6,450.0 738.0,445.8" fill="#b8c4ec"/><polygon points="745.6,438.6 756.0,435.2 756.0,446.2 745.6,450.0" fill="#a8b4e4"/><polygon points="738.0,434.8 748.4,431.0 756.0,435.2 756.0,446.2 745.6,450.0 738.0,445.8" fill="none" stroke="#3a4478" stroke-width="1.1" stroke-linejoin="round"/><polyline points="738.0,434.8 745.6,438.6 756.0,435.2" fill="none" stroke="#3a4478" stroke-width="1.1" stroke-linejoin="round"/><line x1="745.6" y1="438.6" x2="745.6" y2="450.0" stroke="#3a4478" stroke-width="1.1"/><circle cx="741" cy="440" r="1.3" fill="#1a2050"/><circle cx="744" cy="445" r="1.3" fill="#1a2050"/><circle cx="749" cy="443" r="1.3" fill="#1a2050"/><circle cx="752" cy="440" r="1.3" fill="#1a2050"/><circle cx="746" cy="435" r="1.3" fill="#1a2050"/><circle cx="753" cy="446" r="1.3" fill="#1a2050"/><polygon points="738.0,455.8 748.4,452.0 756.0,456.2 745.6,459.6" fill="#c42a3a"/><polygon points="738.0,455.8 745.6,459.6 745.6,471.0 738.0,466.8" fill="#c8d0f0"/><polygon points="745.6,459.6 756.0,456.2 756.0,467.2 745.6,471.0" fill="#9aa8e0"/><polygon points="738.0,455.8 748.4,452.0 756.0,456.2 756.0,467.2 745.6,471.0 738.0,466.8" fill="none" stroke="#5a64a0" stroke-width="1.1" stroke-linejoin="round"/><polyline points="738.0,455.8 745.6,459.6 756.0,456.2" fill="none" stroke="#5a64a0" stroke-width="1.1" stroke-linejoin="round"/><line x1="745.6" y1="459.6" x2="745.6" y2="471.0" stroke="#5a64a0" stroke-width="1.1"/><polygon points="738.0,476.8 748.4,473.0 756.0,477.2 745.6,480.6" fill="#b8c0ec"/><polygon points="738.0,476.8 745.6,480.6 745.6,492.0 738.0,487.8" fill="#a8b4e8"/><polygon points="745.6,480.6 756.0,477.2 756.0,488.2 745.6,492.0" fill="#8a98dc"/><polygon points="738.0,476.8 748.4,473.0 756.0,477.2 756.0,488.2 745.6,492.0 738.0,487.8" fill="none" stroke="#2a3478" stroke-width="1.1" stroke-linejoin="round"/><polyline points="738.0,476.8 745.6,480.6 756.0,477.2" fill="none" stroke="#2a3478" stroke-width="1.1" stroke-linejoin="round"/><line x1="745.6" y1="480.6" x2="745.6" y2="492.0" stroke="#2a3478" stroke-width="1.1"/><path d="M738,477 L746,492 M746,481 L756,477 M748,491 L755,481" stroke="#2a3478" stroke-width="1"/><polygon points="738.0,497.8 748.4,494.0 756.0,498.2 745.6,501.6" fill="#dfe4f7"/><polygon points="738.0,497.8 745.6,501.6 745.6,513.0 738.0,508.8" fill="#c8d0f0"/><polygon points="745.6,501.6 756.0,498.2 756.0,509.2 745.6,513.0" fill="#9aa8e0"/><polygon points="738.0,497.8 748.4,494.0 756.0,498.2 756.0,509.2 745.6,513.0 738.0,508.8" fill="none" stroke="#5a64a0" stroke-width="1.1" stroke-linejoin="round"/><polyline points="738.0,497.8 745.6,501.6 756.0,498.2" fill="none" stroke="#5a64a0" stroke-width="1.1" stroke-linejoin="round"/><line x1="745.6" y1="501.6" x2="745.6" y2="513.0" stroke="#5a64a0" stroke-width="1.1"/><path d="M741,499 L741,511" stroke="#5a64a0" stroke-width="0.8"/><polygon points="738.0,518.8 748.4,515.0 756.0,519.2 745.6,522.6" fill="#dfe4f7"/><polygon points="738.0,518.8 745.6,522.6 745.6,534.0 738.0,529.8" fill="#c8d0f0"/><polygon points="745.6,522.6 756.0,519.2 756.0,530.2 745.6,534.0" fill="#9aa8e0"/><polygon points="738.0,518.8 748.4,515.0 756.0,519.2 756.0,530.2 745.6,534.0 738.0,529.8" fill="none" stroke="#5a64a0" stroke-width="1.1" stroke-linejoin="round"/><polyline points="738.0,518.8 745.6,522.6 756.0,519.2" fill="none" stroke="#5a64a0" stroke-width="1.1" stroke-linejoin="round"/><line x1="745.6" y1="522.6" x2="745.6" y2="534.0" stroke="#5a64a0" stroke-width="1.1"/><path d="M743,559 L751,559 L755,563 L755,576 L743,576 Z" fill="#d8f0f8" stroke="#3a8aa8" stroke-width="1"/><path d="M745.5,565 H752.5 M745.5,567.5 H752.5 M745.5,570 H752.5" stroke="#2a6a88" stroke-width="0.9"/></svg>
<div class="t" style="top:324.62px;font-size:11.5px;line-height:11.5px;color:#000;left:862.5px;transform:scaleX(1.0000);transform-origin:0 0;">Current Part:</div>
<div class="a" style="left:936px;top:323px;width:351px;height:21px;background:#e5e5e5;border:1px solid #acacac"></div>
<div class="t" style="top:329.62px;font-size:11.5px;line-height:11.5px;color:#000;left:941px;transform:scaleX(1.0000);transform-origin:0 0;">stl&nbsp; new</div>
<svg class="a" style="left:1272px;top:329px;" width="11" height="8" viewBox="0 0 11 8"><path d="M1 1.5 L5.5 6 L10 1.5" stroke="#222" stroke-width="1.3" fill="none"/></svg>
<div class="a" style="left:1292px;top:324px;width:44px;height:22px;background:#cccccc;border:1px solid #bfbfbf"></div>
<div class="t" style="top:330.62px;font-size:11.5px;line-height:11.5px;color:#838383;left:1302.17px;transform:scaleX(1.0000);transform-origin:50% 0;">Next</div>
<div class="a" style="left:860px;top:355px;width:473px;height:382px;background:linear-gradient(#fefefe,#f0f0f0);border:1px solid #a8a8a8;border-radius:3px"></div>
<div class="a" style="left:870px;top:381px;width:452px;height:69px;border:1px solid #dcdcdc;border-top:none;background:linear-gradient(#fdfdfd,#f8f8f8)"></div>
<div class="a" style="left:870px;top:381px;width:6px;height:1px;background:#dcdcdc"></div>
<div class="a" style="left:916px;top:381px;width:406px;height:1px;background:#dcdcdc"></div>
<div class="t" style="top:377.62px;font-size:11.5px;line-height:11.5px;color:#000;left:879px;transform:scaleX(1.0000);transform-origin:0 0;">Advice</div>
<div class="t" style="top:397.62px;font-size:11.5px;line-height:11.5px;color:#000;left:883.5px;transform:scaleX(1.0069);transform-origin:0 0;">Go to the 'Shells' page to unify shells or manually merge some parts.</div>
<div class="a" style="left:1297px;top:394px;width:15px;height:46px;background:#f0f0f0"></div>
<svg class="a" style="left:1298px;top:397px;" width="12" height="10" viewBox="0 0 12 10"><path d="M2.5 7 L6 3.5 L9.5 7" stroke="#b0b0b0" stroke-width="1.1" fill="none"/></svg>
<svg class="a" style="left:1298px;top:427px;" width="12" height="10" viewBox="0 0 12 10"><path d="M2.5 3 L6 6.5 L9.5 3" stroke="#b0b0b0" stroke-width="1.1" fill="none"/></svg>
<div class="a" style="left:870px;top:461px;width:452px;height:265px;border:1px solid #dcdcdc;border-top:none;background:linear-gradient(#f9f9f9,#f0f0f0)"></div>
<div class="a" style="left:870px;top:461px;width:6px;height:1px;background:#dcdcdc"></div>
<div class="a" style="left:940px;top:461px;width:382px;height:1px;background:#dcdcdc"></div>
<div class="t" style="top:457.62px;font-size:11.5px;line-height:11.5px;color:#000;left:879px;transform:scaleX(1.0000);transform-origin:0 0;">Diagnostics</div>
<div class="a" style="left:880px;top:476px;width:13px;height:13px;background:#fff;border:1px solid #333"></div>
<div class="t" style="top:478.62px;font-size:11.5px;line-height:11.5px;color:#000;left:896.5px;transform:scaleX(1.0000);transform-origin:0 0;">Full Analysis</div>
<div class="a" style="left:900px;top:506px;width:13px;height:13px;background:#fff;border:1px solid #333"></div>
<svg class="a" style="left:900px;top:506px;" width="13" height="13" viewBox="0 0 13 13"><path d="M2.5 6.5 L5.5 9.5 L10.5 3.5" stroke="#222" stroke-width="1.4" fill="none"/></svg>
<svg class="a" style="left:0px;top:0px;" width="1528" height="1038" viewBox="0 0 1528 1038"><path d="M921.5,513 L927,519.5 L935.5,506.5" stroke="#1f7d3c" stroke-width="3.8" fill="none" stroke-linejoin="miter" stroke-miterlimit="6"/></svg>
<div class="t" style="top:507.12px;font-size:11.5px;line-height:11.5px;color:#000;font-weight:bold;left:940px;transform:scaleX(1.0000);transform-origin:0 0;">0</div>
<div class="t" style="top:506.62px;font-size:11.5px;line-height:11.5px;color:#000;left:985.5px;transform:scaleX(1.0000);transform-origin:0 0;">inverted normals detected</div>
<div class="a" style="left:900px;top:526px;width:13px;height:13px;background:#fff;border:1px solid #333"></div>
<svg class="a" style="left:900px;top:526px;" width="13" height="13" viewBox="0 0 13 13"><path d="M2.5 6.5 L5.5 9.5 L10.5 3.5" stroke="#222" stroke-width="1.4" fill="none"/></svg>
<svg class="a" style="left:0px;top:0px;" width="1528" height="1038" viewBox="0 0 1528 1038"><path d="M921.5,533 L927,539.5 L935.5,526.5" stroke="#1f7d3c" stroke-width="3.8" fill="none" stroke-linejoin="miter" stroke-miterlimit="6"/></svg>
<div class="t" style="top:527.12px;font-size:11.5px;line-height:11.5px;color:#000;font-weight:bold;left:940px;transform:scaleX(1.0000);transform-origin:0 0;">0</div>
<div class="t" style="top:526.62px;font-size:11.5px;line-height:11.5px;color:#000;left:985.5px;transform:scaleX(1.0000);transform-origin:0 0;">bad edges detected</div>
<svg class="a" style="left:0px;top:0px;" width="1528" height="1038" viewBox="0 0 1528 1038"><path d="M941.5,553 L947,559.5 L955.5,546.5" stroke="#1f7d3c" stroke-width="3.8" fill="none" stroke-linejoin="miter" stroke-miterlimit="6"/></svg>
<div class="t" style="top:547.12px;font-size:11.5px;line-height:11.5px;color:#000;font-weight:bold;left:960px;transform:scaleX(1.0000);transform-origin:0 0;">0</div>
<div class="t" style="top:546.62px;font-size:11.5px;line-height:11.5px;color:#000;left:1005.5px;transform:scaleX(1.0000);transform-origin:0 0;">bad contours detected</div>
<div class="a" style="left:920px;top:566px;width:13px;height:13px;background:#fff;border:1px solid #333"></div>
<svg class="a" style="left:920px;top:566px;" width="13" height="13" viewBox="0 0 13 13"><path d="M2.5 6.5 L5.5 9.5 L10.5 3.5" stroke="#222" stroke-width="1.4" fill="none"/></svg>
<svg class="a" style="left:0px;top:0px;" width="1528" height="1038" viewBox="0 0 1528 1038"><path d="M941.5,573 L947,579.5 L955.5,566.5" stroke="#1f7d3c" stroke-width="3.8" fill="none" stroke-linejoin="miter" stroke-miterlimit="6"/></svg>
<div class="t" style="top:567.12px;font-size:11.5px;line-height:11.5px;color:#000;font-weight:bold;left:960px;transform:scaleX(1.0000);transform-origin:0 0;">0</div>
<div class="t" style="top:566.62px;font-size:11.5px;line-height:11.5px;color:#000;left:1005.5px;transform:scaleX(1.0000);transform-origin:0 0;">near bad edges detected</div>
<div class="a" style="left:920px;top:586px;width:13px;height:13px;background:#fff;border:1px solid #333"></div>
<svg class="a" style="left:920px;top:586px;" width="13" height="13" viewBox="0 0 13 13"><path d="M2.5 6.5 L5.5 9.5 L10.5 3.5" stroke="#222" stroke-width="1.4" fill="none"/></svg>
<svg class="a" style="left:0px;top:0px;" width="1528" height="1038" viewBox="0 0 1528 1038"><path d="M941.5,593 L947,599.5 L955.5,586.5" stroke="#1f7d3c" stroke-width="3.8" fill="none" stroke-linejoin="miter" stroke-miterlimit="6"/></svg>
<div class="t" style="top:587.12px;font-size:11.5px;line-height:11.5px;color:#000;font-weight:bold;left:960px;transform:scaleX(1.0000);transform-origin:0 0;">0</div>
<div class="t" style="top:586.62px;font-size:11.5px;line-height:11.5px;color:#000;left:1005.5px;transform:scaleX(1.0000);transform-origin:0 0;">planar holes detected</div>
<div class="a" style="left:900px;top:606px;width:13px;height:13px;background:#fff;border:1px solid #333"></div>
<svg class="a" style="left:900px;top:606px;" width="13" height="13" viewBox="0 0 13 13"><path d="M2.5 6.5 L5.5 9.5 L10.5 3.5" stroke="#222" stroke-width="1.4" fill="none"/></svg>
<svg class="a" style="left:0px;top:0px;" width="1528" height="1038" viewBox="0 0 1528 1038"><path d="M921,607 L935,620 M935,607 L921,620" stroke="#e02424" stroke-width="3.2" stroke-linecap="round"/><path d="M923,608 L934,618" stroke="#a01818" stroke-width="1"/></svg>
<div class="t" style="top:607.12px;font-size:11.5px;line-height:11.5px;color:#000;font-weight:bold;left:940px;transform:scaleX(1.0000);transform-origin:0 0;">4</div>
<div class="t" style="top:606.62px;font-size:11.5px;line-height:11.5px;color:#000;left:985.5px;transform:scaleX(1.0000);transform-origin:0 0;">shells detected</div>
<svg class="a" style="left:0px;top:0px;" width="1528" height="1038" viewBox="0 0 1528 1038"><path d="M941.5,633 L947,639.5 L955.5,626.5" stroke="#1f7d3c" stroke-width="3.8" fill="none" stroke-linejoin="miter" stroke-miterlimit="6"/></svg>
<div class="t" style="top:627.12px;font-size:11.5px;line-height:11.5px;color:#000;font-weight:bold;left:960px;transform:scaleX(1.0000);transform-origin:0 0;">0</div>
<div class="t" style="top:626.62px;font-size:11.5px;line-height:11.5px;color:#000;left:1005.5px;transform:scaleX(1.0000);transform-origin:0 0;">possible noise shells detected</div>
<div class="a" style="left:900px;top:646px;width:13px;height:13px;background:#fff;border:1px solid #333"></div>
<svg class="a" style="left:0px;top:0px;" width="1528" height="1038" viewBox="0 0 1528 1038"><circle cx="928" cy="653" r="1.3" fill="#2a3aa0"/></svg>
<div class="t" style="top:646.62px;font-size:11.5px;line-height:11.5px;color:#000;left:985.5px;transform:scaleX(1.0000);transform-origin:0 0;">overlapping triangles detected</div>
<div class="a" style="left:900px;top:666px;width:13px;height:13px;background:#fff;border:1px solid #333"></div>
<svg class="a" style="left:0px;top:0px;" width="1528" height="1038" viewBox="0 0 1528 1038"><circle cx="928" cy="673" r="1.3" fill="#2a3aa0"/></svg>
<div class="t" style="top:666.62px;font-size:11.5px;line-height:11.5px;color:#000;left:985.5px;transform:scaleX(1.0000);transform-origin:0 0;">intersecting triangles detected</div>
<div class="a" style="left:1202px;top:693px;width:111px;height:24px;background:#e1e1e1;border:1px solid #adadad"></div>
<div class="t" style="top:700.62px;font-size:11.5px;line-height:11.5px;color:#000;left:1246.45px;transform:scaleX(1.0000);transform-origin:50% 0;">Update</div>
<svg class="a" style="left:0px;top:0px;" width="1528" height="1038" viewBox="0 0 1528 1038"><path d="M1207.5,714 L1214,707" stroke="#7a6a3a" stroke-width="3.4" stroke-linecap="round"/><path d="M1208,713.5 L1213.5,707.5" stroke="#e8d070" stroke-width="1.6" stroke-linecap="round"/><circle cx="1218.5" cy="702.5" r="6" fill="#c8e2f6" stroke="#3a6a98" stroke-width="1.4"/></svg>
<div class="a" style="left:1042px;top:802px;width:150px;height:25px;background:#e1e1e1;border:1px solid #adadad"></div>
<div class="t" style="top:809.62px;font-size:11.5px;line-height:11.5px;color:#000;left:1088.84px;transform:scaleX(1.0000);transform-origin:50% 0;">Follow Advice</div>
<svg class="a" style="left:0px;top:0px;" width="1528" height="1038" viewBox="0 0 1528 1038"><path d="M1047,810.5 H1055.5 V805.5 L1066,813.5 L1055.5,821.5 V816.5 H1047 Z" fill="#4ad04a" stroke="#0e4a0e" stroke-width="1.3" stroke-linejoin="round"/></svg>
<div class="a" style="left:1198px;top:802px;width:58px;height:24px;background:#e1e1e1;border:1px solid #adadad"></div>
<div class="t" style="top:809.62px;font-size:11.5px;line-height:11.5px;color:#000;left:1212.30px;transform:scaleX(1.0000);transform-origin:50% 0;">Close</div>
<div class="a" style="left:1263px;top:802px;width:58px;height:24px;background:#e1e1e1;border:1px solid #adadad"></div>
<div class="t" style="top:809.62px;font-size:11.5px;line-height:11.5px;color:#000;left:1280.17px;transform:scaleX(1.0000);transform-origin:50% 0;">Help</div>
<svg class="a" style="left:1328px;top:815px;" width="12" height="12" viewBox="0 0 12 12"><path d="M11 3 L3 11 M11 7 L7 11" stroke="#9a9a9a" stroke-width="1.2"/></svg>
</body></html>
